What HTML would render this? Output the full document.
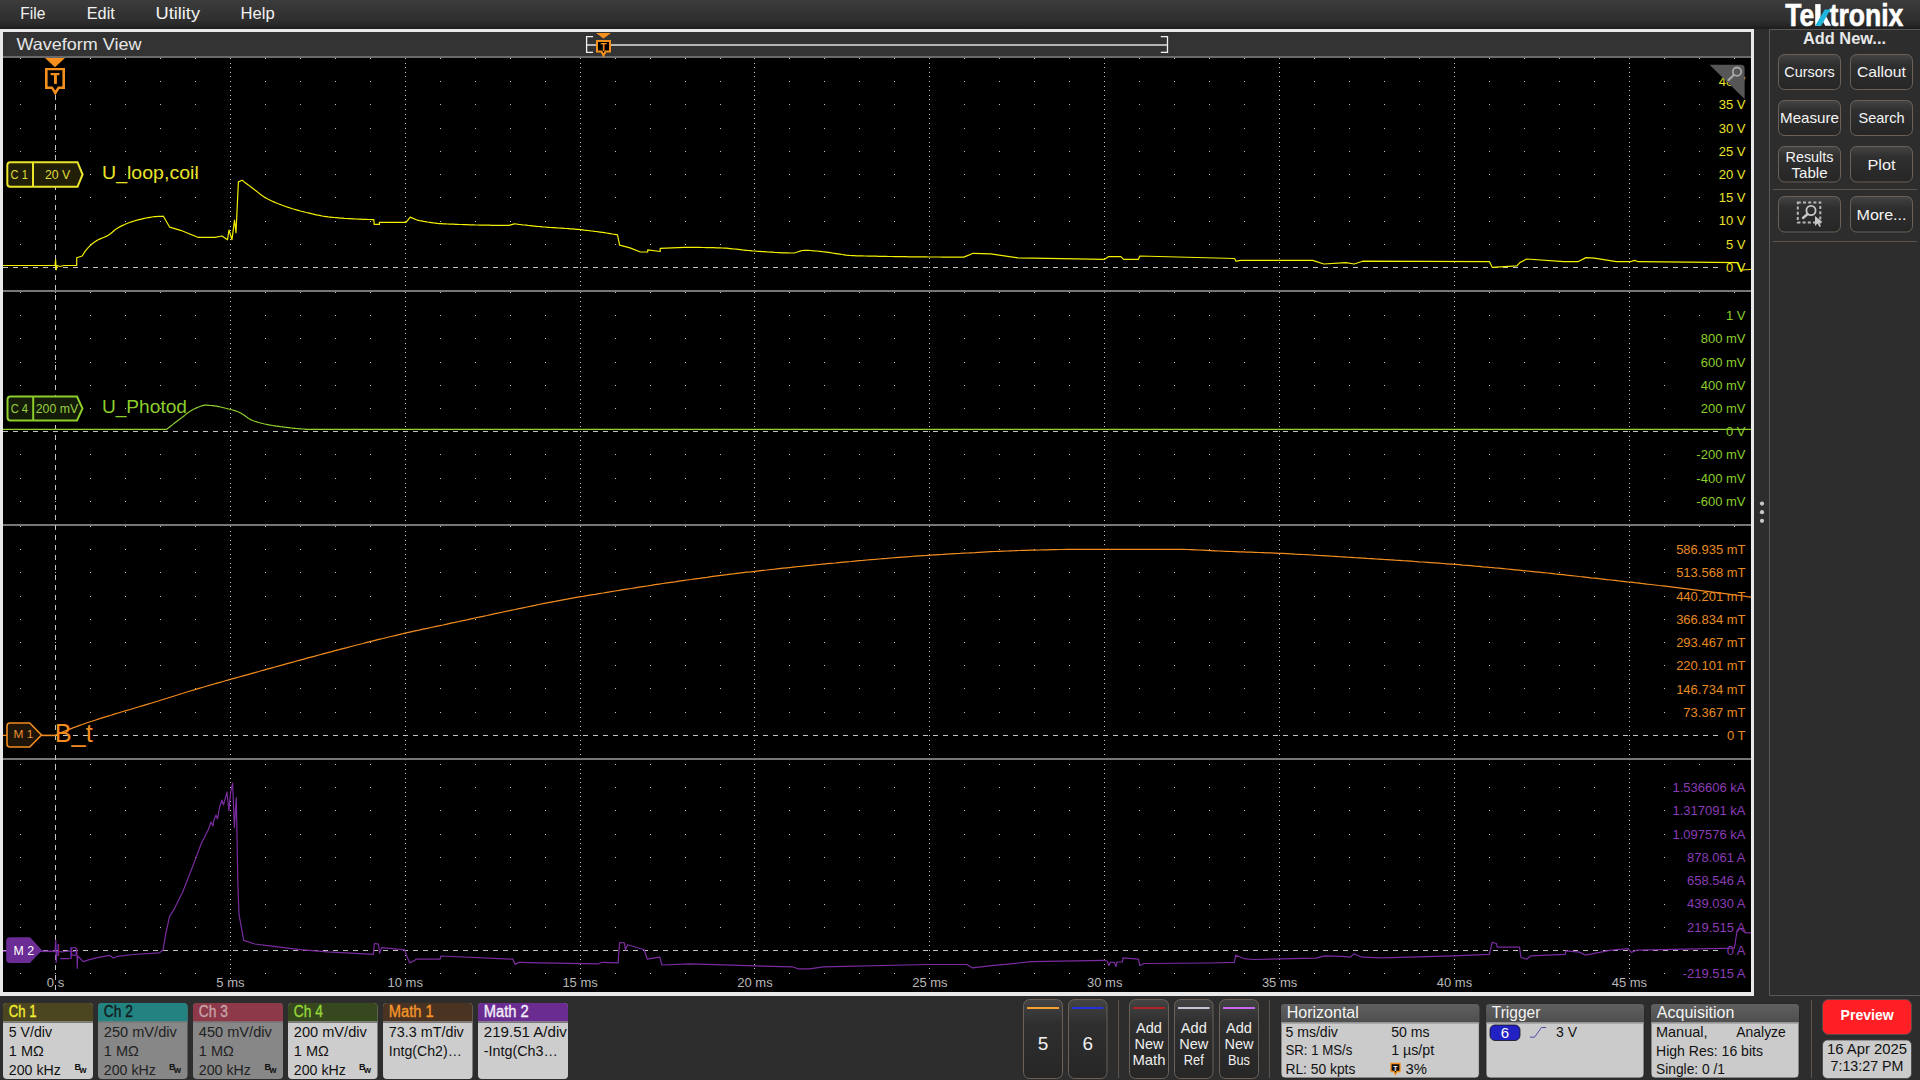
<!DOCTYPE html><html><head><meta charset="utf-8"><style>
html,body{margin:0;padding:0;width:1920px;height:1080px;overflow:hidden;background:#2c2c2c;}
svg text{font-family:"Liberation Sans", sans-serif;}
</style></head><body>
<svg width="1920" height="1080" viewBox="0 0 1920 1080" style="position:absolute;left:0;top:0;display:block">
<defs><linearGradient id="mb" x1="0" y1="0" x2="0" y2="1"><stop offset="0" stop-color="#3c3c3c"/><stop offset="0.72" stop-color="#2e2e2e"/><stop offset="0.86" stop-color="#272727"/><stop offset="1" stop-color="#1c1c1c"/></linearGradient><linearGradient id="btn" x1="0" y1="0" x2="0" y2="1"><stop offset="0" stop-color="#444"/><stop offset="0.3" stop-color="#2f2f2f"/><stop offset="1" stop-color="#262626"/></linearGradient><linearGradient id="hdr" x1="0" y1="0" x2="0" y2="1"><stop offset="0" stop-color="#606060"/><stop offset="1" stop-color="#4e4e4e"/></linearGradient></defs>
<rect x="0" y="0" width="1920" height="1080" fill="#2d2d2d"/>
<rect x="0" y="0" width="1920" height="29" fill="url(#mb)"/>
<text x="20.3" y="19.0" font-size="16" fill="#f2f2f2" textLength="25.0" lengthAdjust="spacingAndGlyphs">File</text>
<text x="86.7" y="19.0" font-size="16" fill="#f2f2f2" textLength="28.1" lengthAdjust="spacingAndGlyphs">Edit</text>
<text x="155.5" y="19.0" font-size="16" fill="#f2f2f2" textLength="44.5" lengthAdjust="spacingAndGlyphs">Utility</text>
<text x="240.6" y="19.0" font-size="16" fill="#f2f2f2" textLength="34.1" lengthAdjust="spacingAndGlyphs">Help</text>
<text x="1785.3" y="25.7" font-size="31" fill="#ffffff" textLength="28.9" lengthAdjust="spacingAndGlyphs" font-weight="bold" stroke="#fff" stroke-width="0.6">Te</text>
<text x="1829.6" y="25.7" font-size="31" fill="#ffffff" textLength="73.8" lengthAdjust="spacingAndGlyphs" font-weight="bold" stroke="#fff" stroke-width="0.6">tronix</text>
<rect x="1815.2" y="4.1" width="5.4" height="21.6" fill="#fff"/>
<path d="M1821.8 19.2 L1825.8 15.8 L1831.2 25.7 L1825.2 25.7 Z" fill="#fff"/>
<path d="M1815.2 25.7 L1821.3 25.7 L1830.4 9.5 L1824.7 9.5 Z" fill="#1eb6dc"/>
<rect x="0" y="29" width="1754" height="967" fill="#e9e9e9"/>
<rect x="3" y="32" width="1748" height="24" fill="#333333"/>
<rect x="3" y="56" width="1748" height="2" fill="#6a6a6a"/>
<rect x="3" y="58" width="1748" height="934" fill="#000000"/>
<text x="16.4" y="49.7" font-size="16.5" fill="#e6e6e6" textLength="125.0" lengthAdjust="spacingAndGlyphs">Waveform View</text>
<rect x="586" y="44" width="581" height="2" fill="#b4b4b4"/>
<path d="M593 36.6 H586.6 V52.4 H593" fill="none" stroke="#f0f0f0" stroke-width="1.3"/>
<path d="M1160.8 36.6 H1167.5 V52.4 H1160.8" fill="none" stroke="#f0f0f0" stroke-width="1.3"/>
<path d="M596 33 H611 L603.5 38.5 Z" fill="#f5901e"/>
<path d="M597 41 H610 V51.5 H605.5 L603.5 55.5 L601.5 51.5 H597 Z" fill="#000" stroke="#f5901e" stroke-width="2"/>
<text x="603.5" y="50.5" font-size="10" fill="#f5901e" text-anchor="middle" font-weight="bold">T</text>
<path fill="#c0c0c0" d="M20 58h1v1h-1zM55 58h1v1h-1zM90 58h1v1h-1zM125 58h1v1h-1zM160 58h1v1h-1zM195 58h1v1h-1zM230 58h1v1h-1zM265 58h1v1h-1zM300 58h1v1h-1zM335 58h1v1h-1zM370 58h1v1h-1zM405 58h1v1h-1zM440 58h1v1h-1zM475 58h1v1h-1zM510 58h1v1h-1zM545 58h1v1h-1zM580 58h1v1h-1zM615 58h1v1h-1zM650 58h1v1h-1zM685 58h1v1h-1zM720 58h1v1h-1zM754 58h1v1h-1zM789 58h1v1h-1zM824 58h1v1h-1zM859 58h1v1h-1zM894 58h1v1h-1zM929 58h1v1h-1zM964 58h1v1h-1zM999 58h1v1h-1zM1034 58h1v1h-1zM1069 58h1v1h-1zM1104 58h1v1h-1zM1139 58h1v1h-1zM1174 58h1v1h-1zM1209 58h1v1h-1zM1244 58h1v1h-1zM1279 58h1v1h-1zM1314 58h1v1h-1zM1349 58h1v1h-1zM1384 58h1v1h-1zM1419 58h1v1h-1zM1454 58h1v1h-1zM1489 58h1v1h-1zM1524 58h1v1h-1zM1559 58h1v1h-1zM1594 58h1v1h-1zM1629 58h1v1h-1zM1664 58h1v1h-1zM1699 58h1v1h-1zM1734 58h1v1h-1zM20 81h1v1h-1zM55 81h1v1h-1zM90 81h1v1h-1zM125 81h1v1h-1zM160 81h1v1h-1zM195 81h1v1h-1zM230 81h1v1h-1zM265 81h1v1h-1zM300 81h1v1h-1zM335 81h1v1h-1zM370 81h1v1h-1zM405 81h1v1h-1zM440 81h1v1h-1zM475 81h1v1h-1zM510 81h1v1h-1zM545 81h1v1h-1zM580 81h1v1h-1zM615 81h1v1h-1zM650 81h1v1h-1zM685 81h1v1h-1zM720 81h1v1h-1zM754 81h1v1h-1zM789 81h1v1h-1zM824 81h1v1h-1zM859 81h1v1h-1zM894 81h1v1h-1zM929 81h1v1h-1zM964 81h1v1h-1zM999 81h1v1h-1zM1034 81h1v1h-1zM1069 81h1v1h-1zM1104 81h1v1h-1zM1139 81h1v1h-1zM1174 81h1v1h-1zM1209 81h1v1h-1zM1244 81h1v1h-1zM1279 81h1v1h-1zM1314 81h1v1h-1zM1349 81h1v1h-1zM1384 81h1v1h-1zM1419 81h1v1h-1zM1454 81h1v1h-1zM1489 81h1v1h-1zM1524 81h1v1h-1zM1559 81h1v1h-1zM1594 81h1v1h-1zM1629 81h1v1h-1zM1664 81h1v1h-1zM1699 81h1v1h-1zM1734 81h1v1h-1zM20 104h1v1h-1zM55 104h1v1h-1zM90 104h1v1h-1zM125 104h1v1h-1zM160 104h1v1h-1zM195 104h1v1h-1zM230 104h1v1h-1zM265 104h1v1h-1zM300 104h1v1h-1zM335 104h1v1h-1zM370 104h1v1h-1zM405 104h1v1h-1zM440 104h1v1h-1zM475 104h1v1h-1zM510 104h1v1h-1zM545 104h1v1h-1zM580 104h1v1h-1zM615 104h1v1h-1zM650 104h1v1h-1zM685 104h1v1h-1zM720 104h1v1h-1zM754 104h1v1h-1zM789 104h1v1h-1zM824 104h1v1h-1zM859 104h1v1h-1zM894 104h1v1h-1zM929 104h1v1h-1zM964 104h1v1h-1zM999 104h1v1h-1zM1034 104h1v1h-1zM1069 104h1v1h-1zM1104 104h1v1h-1zM1139 104h1v1h-1zM1174 104h1v1h-1zM1209 104h1v1h-1zM1244 104h1v1h-1zM1279 104h1v1h-1zM1314 104h1v1h-1zM1349 104h1v1h-1zM1384 104h1v1h-1zM1419 104h1v1h-1zM1454 104h1v1h-1zM1489 104h1v1h-1zM1524 104h1v1h-1zM1559 104h1v1h-1zM1594 104h1v1h-1zM1629 104h1v1h-1zM1664 104h1v1h-1zM1699 104h1v1h-1zM1734 104h1v1h-1zM20 128h1v1h-1zM55 128h1v1h-1zM90 128h1v1h-1zM125 128h1v1h-1zM160 128h1v1h-1zM195 128h1v1h-1zM230 128h1v1h-1zM265 128h1v1h-1zM300 128h1v1h-1zM335 128h1v1h-1zM370 128h1v1h-1zM405 128h1v1h-1zM440 128h1v1h-1zM475 128h1v1h-1zM510 128h1v1h-1zM545 128h1v1h-1zM580 128h1v1h-1zM615 128h1v1h-1zM650 128h1v1h-1zM685 128h1v1h-1zM720 128h1v1h-1zM754 128h1v1h-1zM789 128h1v1h-1zM824 128h1v1h-1zM859 128h1v1h-1zM894 128h1v1h-1zM929 128h1v1h-1zM964 128h1v1h-1zM999 128h1v1h-1zM1034 128h1v1h-1zM1069 128h1v1h-1zM1104 128h1v1h-1zM1139 128h1v1h-1zM1174 128h1v1h-1zM1209 128h1v1h-1zM1244 128h1v1h-1zM1279 128h1v1h-1zM1314 128h1v1h-1zM1349 128h1v1h-1zM1384 128h1v1h-1zM1419 128h1v1h-1zM1454 128h1v1h-1zM1489 128h1v1h-1zM1524 128h1v1h-1zM1559 128h1v1h-1zM1594 128h1v1h-1zM1629 128h1v1h-1zM1664 128h1v1h-1zM1699 128h1v1h-1zM1734 128h1v1h-1zM20 151h1v1h-1zM55 151h1v1h-1zM90 151h1v1h-1zM125 151h1v1h-1zM160 151h1v1h-1zM195 151h1v1h-1zM230 151h1v1h-1zM265 151h1v1h-1zM300 151h1v1h-1zM335 151h1v1h-1zM370 151h1v1h-1zM405 151h1v1h-1zM440 151h1v1h-1zM475 151h1v1h-1zM510 151h1v1h-1zM545 151h1v1h-1zM580 151h1v1h-1zM615 151h1v1h-1zM650 151h1v1h-1zM685 151h1v1h-1zM720 151h1v1h-1zM754 151h1v1h-1zM789 151h1v1h-1zM824 151h1v1h-1zM859 151h1v1h-1zM894 151h1v1h-1zM929 151h1v1h-1zM964 151h1v1h-1zM999 151h1v1h-1zM1034 151h1v1h-1zM1069 151h1v1h-1zM1104 151h1v1h-1zM1139 151h1v1h-1zM1174 151h1v1h-1zM1209 151h1v1h-1zM1244 151h1v1h-1zM1279 151h1v1h-1zM1314 151h1v1h-1zM1349 151h1v1h-1zM1384 151h1v1h-1zM1419 151h1v1h-1zM1454 151h1v1h-1zM1489 151h1v1h-1zM1524 151h1v1h-1zM1559 151h1v1h-1zM1594 151h1v1h-1zM1629 151h1v1h-1zM1664 151h1v1h-1zM1699 151h1v1h-1zM1734 151h1v1h-1zM20 174h1v1h-1zM55 174h1v1h-1zM90 174h1v1h-1zM125 174h1v1h-1zM160 174h1v1h-1zM195 174h1v1h-1zM230 174h1v1h-1zM265 174h1v1h-1zM300 174h1v1h-1zM335 174h1v1h-1zM370 174h1v1h-1zM405 174h1v1h-1zM440 174h1v1h-1zM475 174h1v1h-1zM510 174h1v1h-1zM545 174h1v1h-1zM580 174h1v1h-1zM615 174h1v1h-1zM650 174h1v1h-1zM685 174h1v1h-1zM720 174h1v1h-1zM754 174h1v1h-1zM789 174h1v1h-1zM824 174h1v1h-1zM859 174h1v1h-1zM894 174h1v1h-1zM929 174h1v1h-1zM964 174h1v1h-1zM999 174h1v1h-1zM1034 174h1v1h-1zM1069 174h1v1h-1zM1104 174h1v1h-1zM1139 174h1v1h-1zM1174 174h1v1h-1zM1209 174h1v1h-1zM1244 174h1v1h-1zM1279 174h1v1h-1zM1314 174h1v1h-1zM1349 174h1v1h-1zM1384 174h1v1h-1zM1419 174h1v1h-1zM1454 174h1v1h-1zM1489 174h1v1h-1zM1524 174h1v1h-1zM1559 174h1v1h-1zM1594 174h1v1h-1zM1629 174h1v1h-1zM1664 174h1v1h-1zM1699 174h1v1h-1zM1734 174h1v1h-1zM20 197h1v1h-1zM55 197h1v1h-1zM90 197h1v1h-1zM125 197h1v1h-1zM160 197h1v1h-1zM195 197h1v1h-1zM230 197h1v1h-1zM265 197h1v1h-1zM300 197h1v1h-1zM335 197h1v1h-1zM370 197h1v1h-1zM405 197h1v1h-1zM440 197h1v1h-1zM475 197h1v1h-1zM510 197h1v1h-1zM545 197h1v1h-1zM580 197h1v1h-1zM615 197h1v1h-1zM650 197h1v1h-1zM685 197h1v1h-1zM720 197h1v1h-1zM754 197h1v1h-1zM789 197h1v1h-1zM824 197h1v1h-1zM859 197h1v1h-1zM894 197h1v1h-1zM929 197h1v1h-1zM964 197h1v1h-1zM999 197h1v1h-1zM1034 197h1v1h-1zM1069 197h1v1h-1zM1104 197h1v1h-1zM1139 197h1v1h-1zM1174 197h1v1h-1zM1209 197h1v1h-1zM1244 197h1v1h-1zM1279 197h1v1h-1zM1314 197h1v1h-1zM1349 197h1v1h-1zM1384 197h1v1h-1zM1419 197h1v1h-1zM1454 197h1v1h-1zM1489 197h1v1h-1zM1524 197h1v1h-1zM1559 197h1v1h-1zM1594 197h1v1h-1zM1629 197h1v1h-1zM1664 197h1v1h-1zM1699 197h1v1h-1zM1734 197h1v1h-1zM20 221h1v1h-1zM55 221h1v1h-1zM90 221h1v1h-1zM125 221h1v1h-1zM160 221h1v1h-1zM195 221h1v1h-1zM230 221h1v1h-1zM265 221h1v1h-1zM300 221h1v1h-1zM335 221h1v1h-1zM370 221h1v1h-1zM405 221h1v1h-1zM440 221h1v1h-1zM475 221h1v1h-1zM510 221h1v1h-1zM545 221h1v1h-1zM580 221h1v1h-1zM615 221h1v1h-1zM650 221h1v1h-1zM685 221h1v1h-1zM720 221h1v1h-1zM754 221h1v1h-1zM789 221h1v1h-1zM824 221h1v1h-1zM859 221h1v1h-1zM894 221h1v1h-1zM929 221h1v1h-1zM964 221h1v1h-1zM999 221h1v1h-1zM1034 221h1v1h-1zM1069 221h1v1h-1zM1104 221h1v1h-1zM1139 221h1v1h-1zM1174 221h1v1h-1zM1209 221h1v1h-1zM1244 221h1v1h-1zM1279 221h1v1h-1zM1314 221h1v1h-1zM1349 221h1v1h-1zM1384 221h1v1h-1zM1419 221h1v1h-1zM1454 221h1v1h-1zM1489 221h1v1h-1zM1524 221h1v1h-1zM1559 221h1v1h-1zM1594 221h1v1h-1zM1629 221h1v1h-1zM1664 221h1v1h-1zM1699 221h1v1h-1zM1734 221h1v1h-1zM20 244h1v1h-1zM55 244h1v1h-1zM90 244h1v1h-1zM125 244h1v1h-1zM160 244h1v1h-1zM195 244h1v1h-1zM230 244h1v1h-1zM265 244h1v1h-1zM300 244h1v1h-1zM335 244h1v1h-1zM370 244h1v1h-1zM405 244h1v1h-1zM440 244h1v1h-1zM475 244h1v1h-1zM510 244h1v1h-1zM545 244h1v1h-1zM580 244h1v1h-1zM615 244h1v1h-1zM650 244h1v1h-1zM685 244h1v1h-1zM720 244h1v1h-1zM754 244h1v1h-1zM789 244h1v1h-1zM824 244h1v1h-1zM859 244h1v1h-1zM894 244h1v1h-1zM929 244h1v1h-1zM964 244h1v1h-1zM999 244h1v1h-1zM1034 244h1v1h-1zM1069 244h1v1h-1zM1104 244h1v1h-1zM1139 244h1v1h-1zM1174 244h1v1h-1zM1209 244h1v1h-1zM1244 244h1v1h-1zM1279 244h1v1h-1zM1314 244h1v1h-1zM1349 244h1v1h-1zM1384 244h1v1h-1zM1419 244h1v1h-1zM1454 244h1v1h-1zM1489 244h1v1h-1zM1524 244h1v1h-1zM1559 244h1v1h-1zM1594 244h1v1h-1zM1629 244h1v1h-1zM1664 244h1v1h-1zM1699 244h1v1h-1zM1734 244h1v1h-1zM20 292h1v1h-1zM55 292h1v1h-1zM90 292h1v1h-1zM125 292h1v1h-1zM160 292h1v1h-1zM195 292h1v1h-1zM230 292h1v1h-1zM265 292h1v1h-1zM300 292h1v1h-1zM335 292h1v1h-1zM370 292h1v1h-1zM405 292h1v1h-1zM440 292h1v1h-1zM475 292h1v1h-1zM510 292h1v1h-1zM545 292h1v1h-1zM580 292h1v1h-1zM615 292h1v1h-1zM650 292h1v1h-1zM685 292h1v1h-1zM720 292h1v1h-1zM754 292h1v1h-1zM789 292h1v1h-1zM824 292h1v1h-1zM859 292h1v1h-1zM894 292h1v1h-1zM929 292h1v1h-1zM964 292h1v1h-1zM999 292h1v1h-1zM1034 292h1v1h-1zM1069 292h1v1h-1zM1104 292h1v1h-1zM1139 292h1v1h-1zM1174 292h1v1h-1zM1209 292h1v1h-1zM1244 292h1v1h-1zM1279 292h1v1h-1zM1314 292h1v1h-1zM1349 292h1v1h-1zM1384 292h1v1h-1zM1419 292h1v1h-1zM1454 292h1v1h-1zM1489 292h1v1h-1zM1524 292h1v1h-1zM1559 292h1v1h-1zM1594 292h1v1h-1zM1629 292h1v1h-1zM1664 292h1v1h-1zM1699 292h1v1h-1zM1734 292h1v1h-1zM20 315h1v1h-1zM55 315h1v1h-1zM90 315h1v1h-1zM125 315h1v1h-1zM160 315h1v1h-1zM195 315h1v1h-1zM230 315h1v1h-1zM265 315h1v1h-1zM300 315h1v1h-1zM335 315h1v1h-1zM370 315h1v1h-1zM405 315h1v1h-1zM440 315h1v1h-1zM475 315h1v1h-1zM510 315h1v1h-1zM545 315h1v1h-1zM580 315h1v1h-1zM615 315h1v1h-1zM650 315h1v1h-1zM685 315h1v1h-1zM720 315h1v1h-1zM754 315h1v1h-1zM789 315h1v1h-1zM824 315h1v1h-1zM859 315h1v1h-1zM894 315h1v1h-1zM929 315h1v1h-1zM964 315h1v1h-1zM999 315h1v1h-1zM1034 315h1v1h-1zM1069 315h1v1h-1zM1104 315h1v1h-1zM1139 315h1v1h-1zM1174 315h1v1h-1zM1209 315h1v1h-1zM1244 315h1v1h-1zM1279 315h1v1h-1zM1314 315h1v1h-1zM1349 315h1v1h-1zM1384 315h1v1h-1zM1419 315h1v1h-1zM1454 315h1v1h-1zM1489 315h1v1h-1zM1524 315h1v1h-1zM1559 315h1v1h-1zM1594 315h1v1h-1zM1629 315h1v1h-1zM1664 315h1v1h-1zM1699 315h1v1h-1zM1734 315h1v1h-1zM20 338h1v1h-1zM55 338h1v1h-1zM90 338h1v1h-1zM125 338h1v1h-1zM160 338h1v1h-1zM195 338h1v1h-1zM230 338h1v1h-1zM265 338h1v1h-1zM300 338h1v1h-1zM335 338h1v1h-1zM370 338h1v1h-1zM405 338h1v1h-1zM440 338h1v1h-1zM475 338h1v1h-1zM510 338h1v1h-1zM545 338h1v1h-1zM580 338h1v1h-1zM615 338h1v1h-1zM650 338h1v1h-1zM685 338h1v1h-1zM720 338h1v1h-1zM754 338h1v1h-1zM789 338h1v1h-1zM824 338h1v1h-1zM859 338h1v1h-1zM894 338h1v1h-1zM929 338h1v1h-1zM964 338h1v1h-1zM999 338h1v1h-1zM1034 338h1v1h-1zM1069 338h1v1h-1zM1104 338h1v1h-1zM1139 338h1v1h-1zM1174 338h1v1h-1zM1209 338h1v1h-1zM1244 338h1v1h-1zM1279 338h1v1h-1zM1314 338h1v1h-1zM1349 338h1v1h-1zM1384 338h1v1h-1zM1419 338h1v1h-1zM1454 338h1v1h-1zM1489 338h1v1h-1zM1524 338h1v1h-1zM1559 338h1v1h-1zM1594 338h1v1h-1zM1629 338h1v1h-1zM1664 338h1v1h-1zM1699 338h1v1h-1zM1734 338h1v1h-1zM20 362h1v1h-1zM55 362h1v1h-1zM90 362h1v1h-1zM125 362h1v1h-1zM160 362h1v1h-1zM195 362h1v1h-1zM230 362h1v1h-1zM265 362h1v1h-1zM300 362h1v1h-1zM335 362h1v1h-1zM370 362h1v1h-1zM405 362h1v1h-1zM440 362h1v1h-1zM475 362h1v1h-1zM510 362h1v1h-1zM545 362h1v1h-1zM580 362h1v1h-1zM615 362h1v1h-1zM650 362h1v1h-1zM685 362h1v1h-1zM720 362h1v1h-1zM754 362h1v1h-1zM789 362h1v1h-1zM824 362h1v1h-1zM859 362h1v1h-1zM894 362h1v1h-1zM929 362h1v1h-1zM964 362h1v1h-1zM999 362h1v1h-1zM1034 362h1v1h-1zM1069 362h1v1h-1zM1104 362h1v1h-1zM1139 362h1v1h-1zM1174 362h1v1h-1zM1209 362h1v1h-1zM1244 362h1v1h-1zM1279 362h1v1h-1zM1314 362h1v1h-1zM1349 362h1v1h-1zM1384 362h1v1h-1zM1419 362h1v1h-1zM1454 362h1v1h-1zM1489 362h1v1h-1zM1524 362h1v1h-1zM1559 362h1v1h-1zM1594 362h1v1h-1zM1629 362h1v1h-1zM1664 362h1v1h-1zM1699 362h1v1h-1zM1734 362h1v1h-1zM20 385h1v1h-1zM55 385h1v1h-1zM90 385h1v1h-1zM125 385h1v1h-1zM160 385h1v1h-1zM195 385h1v1h-1zM230 385h1v1h-1zM265 385h1v1h-1zM300 385h1v1h-1zM335 385h1v1h-1zM370 385h1v1h-1zM405 385h1v1h-1zM440 385h1v1h-1zM475 385h1v1h-1zM510 385h1v1h-1zM545 385h1v1h-1zM580 385h1v1h-1zM615 385h1v1h-1zM650 385h1v1h-1zM685 385h1v1h-1zM720 385h1v1h-1zM754 385h1v1h-1zM789 385h1v1h-1zM824 385h1v1h-1zM859 385h1v1h-1zM894 385h1v1h-1zM929 385h1v1h-1zM964 385h1v1h-1zM999 385h1v1h-1zM1034 385h1v1h-1zM1069 385h1v1h-1zM1104 385h1v1h-1zM1139 385h1v1h-1zM1174 385h1v1h-1zM1209 385h1v1h-1zM1244 385h1v1h-1zM1279 385h1v1h-1zM1314 385h1v1h-1zM1349 385h1v1h-1zM1384 385h1v1h-1zM1419 385h1v1h-1zM1454 385h1v1h-1zM1489 385h1v1h-1zM1524 385h1v1h-1zM1559 385h1v1h-1zM1594 385h1v1h-1zM1629 385h1v1h-1zM1664 385h1v1h-1zM1699 385h1v1h-1zM1734 385h1v1h-1zM20 408h1v1h-1zM55 408h1v1h-1zM90 408h1v1h-1zM125 408h1v1h-1zM160 408h1v1h-1zM195 408h1v1h-1zM230 408h1v1h-1zM265 408h1v1h-1zM300 408h1v1h-1zM335 408h1v1h-1zM370 408h1v1h-1zM405 408h1v1h-1zM440 408h1v1h-1zM475 408h1v1h-1zM510 408h1v1h-1zM545 408h1v1h-1zM580 408h1v1h-1zM615 408h1v1h-1zM650 408h1v1h-1zM685 408h1v1h-1zM720 408h1v1h-1zM754 408h1v1h-1zM789 408h1v1h-1zM824 408h1v1h-1zM859 408h1v1h-1zM894 408h1v1h-1zM929 408h1v1h-1zM964 408h1v1h-1zM999 408h1v1h-1zM1034 408h1v1h-1zM1069 408h1v1h-1zM1104 408h1v1h-1zM1139 408h1v1h-1zM1174 408h1v1h-1zM1209 408h1v1h-1zM1244 408h1v1h-1zM1279 408h1v1h-1zM1314 408h1v1h-1zM1349 408h1v1h-1zM1384 408h1v1h-1zM1419 408h1v1h-1zM1454 408h1v1h-1zM1489 408h1v1h-1zM1524 408h1v1h-1zM1559 408h1v1h-1zM1594 408h1v1h-1zM1629 408h1v1h-1zM1664 408h1v1h-1zM1699 408h1v1h-1zM1734 408h1v1h-1zM20 454h1v1h-1zM55 454h1v1h-1zM90 454h1v1h-1zM125 454h1v1h-1zM160 454h1v1h-1zM195 454h1v1h-1zM230 454h1v1h-1zM265 454h1v1h-1zM300 454h1v1h-1zM335 454h1v1h-1zM370 454h1v1h-1zM405 454h1v1h-1zM440 454h1v1h-1zM475 454h1v1h-1zM510 454h1v1h-1zM545 454h1v1h-1zM580 454h1v1h-1zM615 454h1v1h-1zM650 454h1v1h-1zM685 454h1v1h-1zM720 454h1v1h-1zM754 454h1v1h-1zM789 454h1v1h-1zM824 454h1v1h-1zM859 454h1v1h-1zM894 454h1v1h-1zM929 454h1v1h-1zM964 454h1v1h-1zM999 454h1v1h-1zM1034 454h1v1h-1zM1069 454h1v1h-1zM1104 454h1v1h-1zM1139 454h1v1h-1zM1174 454h1v1h-1zM1209 454h1v1h-1zM1244 454h1v1h-1zM1279 454h1v1h-1zM1314 454h1v1h-1zM1349 454h1v1h-1zM1384 454h1v1h-1zM1419 454h1v1h-1zM1454 454h1v1h-1zM1489 454h1v1h-1zM1524 454h1v1h-1zM1559 454h1v1h-1zM1594 454h1v1h-1zM1629 454h1v1h-1zM1664 454h1v1h-1zM1699 454h1v1h-1zM1734 454h1v1h-1zM20 478h1v1h-1zM55 478h1v1h-1zM90 478h1v1h-1zM125 478h1v1h-1zM160 478h1v1h-1zM195 478h1v1h-1zM230 478h1v1h-1zM265 478h1v1h-1zM300 478h1v1h-1zM335 478h1v1h-1zM370 478h1v1h-1zM405 478h1v1h-1zM440 478h1v1h-1zM475 478h1v1h-1zM510 478h1v1h-1zM545 478h1v1h-1zM580 478h1v1h-1zM615 478h1v1h-1zM650 478h1v1h-1zM685 478h1v1h-1zM720 478h1v1h-1zM754 478h1v1h-1zM789 478h1v1h-1zM824 478h1v1h-1zM859 478h1v1h-1zM894 478h1v1h-1zM929 478h1v1h-1zM964 478h1v1h-1zM999 478h1v1h-1zM1034 478h1v1h-1zM1069 478h1v1h-1zM1104 478h1v1h-1zM1139 478h1v1h-1zM1174 478h1v1h-1zM1209 478h1v1h-1zM1244 478h1v1h-1zM1279 478h1v1h-1zM1314 478h1v1h-1zM1349 478h1v1h-1zM1384 478h1v1h-1zM1419 478h1v1h-1zM1454 478h1v1h-1zM1489 478h1v1h-1zM1524 478h1v1h-1zM1559 478h1v1h-1zM1594 478h1v1h-1zM1629 478h1v1h-1zM1664 478h1v1h-1zM1699 478h1v1h-1zM1734 478h1v1h-1zM20 501h1v1h-1zM55 501h1v1h-1zM90 501h1v1h-1zM125 501h1v1h-1zM160 501h1v1h-1zM195 501h1v1h-1zM230 501h1v1h-1zM265 501h1v1h-1zM300 501h1v1h-1zM335 501h1v1h-1zM370 501h1v1h-1zM405 501h1v1h-1zM440 501h1v1h-1zM475 501h1v1h-1zM510 501h1v1h-1zM545 501h1v1h-1zM580 501h1v1h-1zM615 501h1v1h-1zM650 501h1v1h-1zM685 501h1v1h-1zM720 501h1v1h-1zM754 501h1v1h-1zM789 501h1v1h-1zM824 501h1v1h-1zM859 501h1v1h-1zM894 501h1v1h-1zM929 501h1v1h-1zM964 501h1v1h-1zM999 501h1v1h-1zM1034 501h1v1h-1zM1069 501h1v1h-1zM1104 501h1v1h-1zM1139 501h1v1h-1zM1174 501h1v1h-1zM1209 501h1v1h-1zM1244 501h1v1h-1zM1279 501h1v1h-1zM1314 501h1v1h-1zM1349 501h1v1h-1zM1384 501h1v1h-1zM1419 501h1v1h-1zM1454 501h1v1h-1zM1489 501h1v1h-1zM1524 501h1v1h-1zM1559 501h1v1h-1zM1594 501h1v1h-1zM1629 501h1v1h-1zM1664 501h1v1h-1zM1699 501h1v1h-1zM1734 501h1v1h-1zM20 526h1v1h-1zM55 526h1v1h-1zM90 526h1v1h-1zM125 526h1v1h-1zM160 526h1v1h-1zM195 526h1v1h-1zM230 526h1v1h-1zM265 526h1v1h-1zM300 526h1v1h-1zM335 526h1v1h-1zM370 526h1v1h-1zM405 526h1v1h-1zM440 526h1v1h-1zM475 526h1v1h-1zM510 526h1v1h-1zM545 526h1v1h-1zM580 526h1v1h-1zM615 526h1v1h-1zM650 526h1v1h-1zM685 526h1v1h-1zM720 526h1v1h-1zM754 526h1v1h-1zM789 526h1v1h-1zM824 526h1v1h-1zM859 526h1v1h-1zM894 526h1v1h-1zM929 526h1v1h-1zM964 526h1v1h-1zM999 526h1v1h-1zM1034 526h1v1h-1zM1069 526h1v1h-1zM1104 526h1v1h-1zM1139 526h1v1h-1zM1174 526h1v1h-1zM1209 526h1v1h-1zM1244 526h1v1h-1zM1279 526h1v1h-1zM1314 526h1v1h-1zM1349 526h1v1h-1zM1384 526h1v1h-1zM1419 526h1v1h-1zM1454 526h1v1h-1zM1489 526h1v1h-1zM1524 526h1v1h-1zM1559 526h1v1h-1zM1594 526h1v1h-1zM1629 526h1v1h-1zM1664 526h1v1h-1zM1699 526h1v1h-1zM1734 526h1v1h-1zM20 549h1v1h-1zM55 549h1v1h-1zM90 549h1v1h-1zM125 549h1v1h-1zM160 549h1v1h-1zM195 549h1v1h-1zM230 549h1v1h-1zM265 549h1v1h-1zM300 549h1v1h-1zM335 549h1v1h-1zM370 549h1v1h-1zM405 549h1v1h-1zM440 549h1v1h-1zM475 549h1v1h-1zM510 549h1v1h-1zM545 549h1v1h-1zM580 549h1v1h-1zM615 549h1v1h-1zM650 549h1v1h-1zM685 549h1v1h-1zM720 549h1v1h-1zM754 549h1v1h-1zM789 549h1v1h-1zM824 549h1v1h-1zM859 549h1v1h-1zM894 549h1v1h-1zM929 549h1v1h-1zM964 549h1v1h-1zM999 549h1v1h-1zM1034 549h1v1h-1zM1069 549h1v1h-1zM1104 549h1v1h-1zM1139 549h1v1h-1zM1174 549h1v1h-1zM1209 549h1v1h-1zM1244 549h1v1h-1zM1279 549h1v1h-1zM1314 549h1v1h-1zM1349 549h1v1h-1zM1384 549h1v1h-1zM1419 549h1v1h-1zM1454 549h1v1h-1zM1489 549h1v1h-1zM1524 549h1v1h-1zM1559 549h1v1h-1zM1594 549h1v1h-1zM1629 549h1v1h-1zM1664 549h1v1h-1zM1699 549h1v1h-1zM1734 549h1v1h-1zM20 572h1v1h-1zM55 572h1v1h-1zM90 572h1v1h-1zM125 572h1v1h-1zM160 572h1v1h-1zM195 572h1v1h-1zM230 572h1v1h-1zM265 572h1v1h-1zM300 572h1v1h-1zM335 572h1v1h-1zM370 572h1v1h-1zM405 572h1v1h-1zM440 572h1v1h-1zM475 572h1v1h-1zM510 572h1v1h-1zM545 572h1v1h-1zM580 572h1v1h-1zM615 572h1v1h-1zM650 572h1v1h-1zM685 572h1v1h-1zM720 572h1v1h-1zM754 572h1v1h-1zM789 572h1v1h-1zM824 572h1v1h-1zM859 572h1v1h-1zM894 572h1v1h-1zM929 572h1v1h-1zM964 572h1v1h-1zM999 572h1v1h-1zM1034 572h1v1h-1zM1069 572h1v1h-1zM1104 572h1v1h-1zM1139 572h1v1h-1zM1174 572h1v1h-1zM1209 572h1v1h-1zM1244 572h1v1h-1zM1279 572h1v1h-1zM1314 572h1v1h-1zM1349 572h1v1h-1zM1384 572h1v1h-1zM1419 572h1v1h-1zM1454 572h1v1h-1zM1489 572h1v1h-1zM1524 572h1v1h-1zM1559 572h1v1h-1zM1594 572h1v1h-1zM1629 572h1v1h-1zM1664 572h1v1h-1zM1699 572h1v1h-1zM1734 572h1v1h-1zM20 596h1v1h-1zM55 596h1v1h-1zM90 596h1v1h-1zM125 596h1v1h-1zM160 596h1v1h-1zM195 596h1v1h-1zM230 596h1v1h-1zM265 596h1v1h-1zM300 596h1v1h-1zM335 596h1v1h-1zM370 596h1v1h-1zM405 596h1v1h-1zM440 596h1v1h-1zM475 596h1v1h-1zM510 596h1v1h-1zM545 596h1v1h-1zM580 596h1v1h-1zM615 596h1v1h-1zM650 596h1v1h-1zM685 596h1v1h-1zM720 596h1v1h-1zM754 596h1v1h-1zM789 596h1v1h-1zM824 596h1v1h-1zM859 596h1v1h-1zM894 596h1v1h-1zM929 596h1v1h-1zM964 596h1v1h-1zM999 596h1v1h-1zM1034 596h1v1h-1zM1069 596h1v1h-1zM1104 596h1v1h-1zM1139 596h1v1h-1zM1174 596h1v1h-1zM1209 596h1v1h-1zM1244 596h1v1h-1zM1279 596h1v1h-1zM1314 596h1v1h-1zM1349 596h1v1h-1zM1384 596h1v1h-1zM1419 596h1v1h-1zM1454 596h1v1h-1zM1489 596h1v1h-1zM1524 596h1v1h-1zM1559 596h1v1h-1zM1594 596h1v1h-1zM1629 596h1v1h-1zM1664 596h1v1h-1zM1699 596h1v1h-1zM1734 596h1v1h-1zM20 619h1v1h-1zM55 619h1v1h-1zM90 619h1v1h-1zM125 619h1v1h-1zM160 619h1v1h-1zM195 619h1v1h-1zM230 619h1v1h-1zM265 619h1v1h-1zM300 619h1v1h-1zM335 619h1v1h-1zM370 619h1v1h-1zM405 619h1v1h-1zM440 619h1v1h-1zM475 619h1v1h-1zM510 619h1v1h-1zM545 619h1v1h-1zM580 619h1v1h-1zM615 619h1v1h-1zM650 619h1v1h-1zM685 619h1v1h-1zM720 619h1v1h-1zM754 619h1v1h-1zM789 619h1v1h-1zM824 619h1v1h-1zM859 619h1v1h-1zM894 619h1v1h-1zM929 619h1v1h-1zM964 619h1v1h-1zM999 619h1v1h-1zM1034 619h1v1h-1zM1069 619h1v1h-1zM1104 619h1v1h-1zM1139 619h1v1h-1zM1174 619h1v1h-1zM1209 619h1v1h-1zM1244 619h1v1h-1zM1279 619h1v1h-1zM1314 619h1v1h-1zM1349 619h1v1h-1zM1384 619h1v1h-1zM1419 619h1v1h-1zM1454 619h1v1h-1zM1489 619h1v1h-1zM1524 619h1v1h-1zM1559 619h1v1h-1zM1594 619h1v1h-1zM1629 619h1v1h-1zM1664 619h1v1h-1zM1699 619h1v1h-1zM1734 619h1v1h-1zM20 642h1v1h-1zM55 642h1v1h-1zM90 642h1v1h-1zM125 642h1v1h-1zM160 642h1v1h-1zM195 642h1v1h-1zM230 642h1v1h-1zM265 642h1v1h-1zM300 642h1v1h-1zM335 642h1v1h-1zM370 642h1v1h-1zM405 642h1v1h-1zM440 642h1v1h-1zM475 642h1v1h-1zM510 642h1v1h-1zM545 642h1v1h-1zM580 642h1v1h-1zM615 642h1v1h-1zM650 642h1v1h-1zM685 642h1v1h-1zM720 642h1v1h-1zM754 642h1v1h-1zM789 642h1v1h-1zM824 642h1v1h-1zM859 642h1v1h-1zM894 642h1v1h-1zM929 642h1v1h-1zM964 642h1v1h-1zM999 642h1v1h-1zM1034 642h1v1h-1zM1069 642h1v1h-1zM1104 642h1v1h-1zM1139 642h1v1h-1zM1174 642h1v1h-1zM1209 642h1v1h-1zM1244 642h1v1h-1zM1279 642h1v1h-1zM1314 642h1v1h-1zM1349 642h1v1h-1zM1384 642h1v1h-1zM1419 642h1v1h-1zM1454 642h1v1h-1zM1489 642h1v1h-1zM1524 642h1v1h-1zM1559 642h1v1h-1zM1594 642h1v1h-1zM1629 642h1v1h-1zM1664 642h1v1h-1zM1699 642h1v1h-1zM1734 642h1v1h-1zM20 665h1v1h-1zM55 665h1v1h-1zM90 665h1v1h-1zM125 665h1v1h-1zM160 665h1v1h-1zM195 665h1v1h-1zM230 665h1v1h-1zM265 665h1v1h-1zM300 665h1v1h-1zM335 665h1v1h-1zM370 665h1v1h-1zM405 665h1v1h-1zM440 665h1v1h-1zM475 665h1v1h-1zM510 665h1v1h-1zM545 665h1v1h-1zM580 665h1v1h-1zM615 665h1v1h-1zM650 665h1v1h-1zM685 665h1v1h-1zM720 665h1v1h-1zM754 665h1v1h-1zM789 665h1v1h-1zM824 665h1v1h-1zM859 665h1v1h-1zM894 665h1v1h-1zM929 665h1v1h-1zM964 665h1v1h-1zM999 665h1v1h-1zM1034 665h1v1h-1zM1069 665h1v1h-1zM1104 665h1v1h-1zM1139 665h1v1h-1zM1174 665h1v1h-1zM1209 665h1v1h-1zM1244 665h1v1h-1zM1279 665h1v1h-1zM1314 665h1v1h-1zM1349 665h1v1h-1zM1384 665h1v1h-1zM1419 665h1v1h-1zM1454 665h1v1h-1zM1489 665h1v1h-1zM1524 665h1v1h-1zM1559 665h1v1h-1zM1594 665h1v1h-1zM1629 665h1v1h-1zM1664 665h1v1h-1zM1699 665h1v1h-1zM1734 665h1v1h-1zM20 688h1v1h-1zM55 688h1v1h-1zM90 688h1v1h-1zM125 688h1v1h-1zM160 688h1v1h-1zM195 688h1v1h-1zM230 688h1v1h-1zM265 688h1v1h-1zM300 688h1v1h-1zM335 688h1v1h-1zM370 688h1v1h-1zM405 688h1v1h-1zM440 688h1v1h-1zM475 688h1v1h-1zM510 688h1v1h-1zM545 688h1v1h-1zM580 688h1v1h-1zM615 688h1v1h-1zM650 688h1v1h-1zM685 688h1v1h-1zM720 688h1v1h-1zM754 688h1v1h-1zM789 688h1v1h-1zM824 688h1v1h-1zM859 688h1v1h-1zM894 688h1v1h-1zM929 688h1v1h-1zM964 688h1v1h-1zM999 688h1v1h-1zM1034 688h1v1h-1zM1069 688h1v1h-1zM1104 688h1v1h-1zM1139 688h1v1h-1zM1174 688h1v1h-1zM1209 688h1v1h-1zM1244 688h1v1h-1zM1279 688h1v1h-1zM1314 688h1v1h-1zM1349 688h1v1h-1zM1384 688h1v1h-1zM1419 688h1v1h-1zM1454 688h1v1h-1zM1489 688h1v1h-1zM1524 688h1v1h-1zM1559 688h1v1h-1zM1594 688h1v1h-1zM1629 688h1v1h-1zM1664 688h1v1h-1zM1699 688h1v1h-1zM1734 688h1v1h-1zM20 712h1v1h-1zM55 712h1v1h-1zM90 712h1v1h-1zM125 712h1v1h-1zM160 712h1v1h-1zM195 712h1v1h-1zM230 712h1v1h-1zM265 712h1v1h-1zM300 712h1v1h-1zM335 712h1v1h-1zM370 712h1v1h-1zM405 712h1v1h-1zM440 712h1v1h-1zM475 712h1v1h-1zM510 712h1v1h-1zM545 712h1v1h-1zM580 712h1v1h-1zM615 712h1v1h-1zM650 712h1v1h-1zM685 712h1v1h-1zM720 712h1v1h-1zM754 712h1v1h-1zM789 712h1v1h-1zM824 712h1v1h-1zM859 712h1v1h-1zM894 712h1v1h-1zM929 712h1v1h-1zM964 712h1v1h-1zM999 712h1v1h-1zM1034 712h1v1h-1zM1069 712h1v1h-1zM1104 712h1v1h-1zM1139 712h1v1h-1zM1174 712h1v1h-1zM1209 712h1v1h-1zM1244 712h1v1h-1zM1279 712h1v1h-1zM1314 712h1v1h-1zM1349 712h1v1h-1zM1384 712h1v1h-1zM1419 712h1v1h-1zM1454 712h1v1h-1zM1489 712h1v1h-1zM1524 712h1v1h-1zM1559 712h1v1h-1zM1594 712h1v1h-1zM1629 712h1v1h-1zM1664 712h1v1h-1zM1699 712h1v1h-1zM1734 712h1v1h-1zM20 764h1v1h-1zM55 764h1v1h-1zM90 764h1v1h-1zM125 764h1v1h-1zM160 764h1v1h-1zM195 764h1v1h-1zM230 764h1v1h-1zM265 764h1v1h-1zM300 764h1v1h-1zM335 764h1v1h-1zM370 764h1v1h-1zM405 764h1v1h-1zM440 764h1v1h-1zM475 764h1v1h-1zM510 764h1v1h-1zM545 764h1v1h-1zM580 764h1v1h-1zM615 764h1v1h-1zM650 764h1v1h-1zM685 764h1v1h-1zM720 764h1v1h-1zM754 764h1v1h-1zM789 764h1v1h-1zM824 764h1v1h-1zM859 764h1v1h-1zM894 764h1v1h-1zM929 764h1v1h-1zM964 764h1v1h-1zM999 764h1v1h-1zM1034 764h1v1h-1zM1069 764h1v1h-1zM1104 764h1v1h-1zM1139 764h1v1h-1zM1174 764h1v1h-1zM1209 764h1v1h-1zM1244 764h1v1h-1zM1279 764h1v1h-1zM1314 764h1v1h-1zM1349 764h1v1h-1zM1384 764h1v1h-1zM1419 764h1v1h-1zM1454 764h1v1h-1zM1489 764h1v1h-1zM1524 764h1v1h-1zM1559 764h1v1h-1zM1594 764h1v1h-1zM1629 764h1v1h-1zM1664 764h1v1h-1zM1699 764h1v1h-1zM1734 764h1v1h-1zM20 787h1v1h-1zM55 787h1v1h-1zM90 787h1v1h-1zM125 787h1v1h-1zM160 787h1v1h-1zM195 787h1v1h-1zM230 787h1v1h-1zM265 787h1v1h-1zM300 787h1v1h-1zM335 787h1v1h-1zM370 787h1v1h-1zM405 787h1v1h-1zM440 787h1v1h-1zM475 787h1v1h-1zM510 787h1v1h-1zM545 787h1v1h-1zM580 787h1v1h-1zM615 787h1v1h-1zM650 787h1v1h-1zM685 787h1v1h-1zM720 787h1v1h-1zM754 787h1v1h-1zM789 787h1v1h-1zM824 787h1v1h-1zM859 787h1v1h-1zM894 787h1v1h-1zM929 787h1v1h-1zM964 787h1v1h-1zM999 787h1v1h-1zM1034 787h1v1h-1zM1069 787h1v1h-1zM1104 787h1v1h-1zM1139 787h1v1h-1zM1174 787h1v1h-1zM1209 787h1v1h-1zM1244 787h1v1h-1zM1279 787h1v1h-1zM1314 787h1v1h-1zM1349 787h1v1h-1zM1384 787h1v1h-1zM1419 787h1v1h-1zM1454 787h1v1h-1zM1489 787h1v1h-1zM1524 787h1v1h-1zM1559 787h1v1h-1zM1594 787h1v1h-1zM1629 787h1v1h-1zM1664 787h1v1h-1zM1699 787h1v1h-1zM1734 787h1v1h-1zM20 810h1v1h-1zM55 810h1v1h-1zM90 810h1v1h-1zM125 810h1v1h-1zM160 810h1v1h-1zM195 810h1v1h-1zM230 810h1v1h-1zM265 810h1v1h-1zM300 810h1v1h-1zM335 810h1v1h-1zM370 810h1v1h-1zM405 810h1v1h-1zM440 810h1v1h-1zM475 810h1v1h-1zM510 810h1v1h-1zM545 810h1v1h-1zM580 810h1v1h-1zM615 810h1v1h-1zM650 810h1v1h-1zM685 810h1v1h-1zM720 810h1v1h-1zM754 810h1v1h-1zM789 810h1v1h-1zM824 810h1v1h-1zM859 810h1v1h-1zM894 810h1v1h-1zM929 810h1v1h-1zM964 810h1v1h-1zM999 810h1v1h-1zM1034 810h1v1h-1zM1069 810h1v1h-1zM1104 810h1v1h-1zM1139 810h1v1h-1zM1174 810h1v1h-1zM1209 810h1v1h-1zM1244 810h1v1h-1zM1279 810h1v1h-1zM1314 810h1v1h-1zM1349 810h1v1h-1zM1384 810h1v1h-1zM1419 810h1v1h-1zM1454 810h1v1h-1zM1489 810h1v1h-1zM1524 810h1v1h-1zM1559 810h1v1h-1zM1594 810h1v1h-1zM1629 810h1v1h-1zM1664 810h1v1h-1zM1699 810h1v1h-1zM1734 810h1v1h-1zM20 834h1v1h-1zM55 834h1v1h-1zM90 834h1v1h-1zM125 834h1v1h-1zM160 834h1v1h-1zM195 834h1v1h-1zM230 834h1v1h-1zM265 834h1v1h-1zM300 834h1v1h-1zM335 834h1v1h-1zM370 834h1v1h-1zM405 834h1v1h-1zM440 834h1v1h-1zM475 834h1v1h-1zM510 834h1v1h-1zM545 834h1v1h-1zM580 834h1v1h-1zM615 834h1v1h-1zM650 834h1v1h-1zM685 834h1v1h-1zM720 834h1v1h-1zM754 834h1v1h-1zM789 834h1v1h-1zM824 834h1v1h-1zM859 834h1v1h-1zM894 834h1v1h-1zM929 834h1v1h-1zM964 834h1v1h-1zM999 834h1v1h-1zM1034 834h1v1h-1zM1069 834h1v1h-1zM1104 834h1v1h-1zM1139 834h1v1h-1zM1174 834h1v1h-1zM1209 834h1v1h-1zM1244 834h1v1h-1zM1279 834h1v1h-1zM1314 834h1v1h-1zM1349 834h1v1h-1zM1384 834h1v1h-1zM1419 834h1v1h-1zM1454 834h1v1h-1zM1489 834h1v1h-1zM1524 834h1v1h-1zM1559 834h1v1h-1zM1594 834h1v1h-1zM1629 834h1v1h-1zM1664 834h1v1h-1zM1699 834h1v1h-1zM1734 834h1v1h-1zM20 857h1v1h-1zM55 857h1v1h-1zM90 857h1v1h-1zM125 857h1v1h-1zM160 857h1v1h-1zM195 857h1v1h-1zM230 857h1v1h-1zM265 857h1v1h-1zM300 857h1v1h-1zM335 857h1v1h-1zM370 857h1v1h-1zM405 857h1v1h-1zM440 857h1v1h-1zM475 857h1v1h-1zM510 857h1v1h-1zM545 857h1v1h-1zM580 857h1v1h-1zM615 857h1v1h-1zM650 857h1v1h-1zM685 857h1v1h-1zM720 857h1v1h-1zM754 857h1v1h-1zM789 857h1v1h-1zM824 857h1v1h-1zM859 857h1v1h-1zM894 857h1v1h-1zM929 857h1v1h-1zM964 857h1v1h-1zM999 857h1v1h-1zM1034 857h1v1h-1zM1069 857h1v1h-1zM1104 857h1v1h-1zM1139 857h1v1h-1zM1174 857h1v1h-1zM1209 857h1v1h-1zM1244 857h1v1h-1zM1279 857h1v1h-1zM1314 857h1v1h-1zM1349 857h1v1h-1zM1384 857h1v1h-1zM1419 857h1v1h-1zM1454 857h1v1h-1zM1489 857h1v1h-1zM1524 857h1v1h-1zM1559 857h1v1h-1zM1594 857h1v1h-1zM1629 857h1v1h-1zM1664 857h1v1h-1zM1699 857h1v1h-1zM1734 857h1v1h-1zM20 880h1v1h-1zM55 880h1v1h-1zM90 880h1v1h-1zM125 880h1v1h-1zM160 880h1v1h-1zM195 880h1v1h-1zM230 880h1v1h-1zM265 880h1v1h-1zM300 880h1v1h-1zM335 880h1v1h-1zM370 880h1v1h-1zM405 880h1v1h-1zM440 880h1v1h-1zM475 880h1v1h-1zM510 880h1v1h-1zM545 880h1v1h-1zM580 880h1v1h-1zM615 880h1v1h-1zM650 880h1v1h-1zM685 880h1v1h-1zM720 880h1v1h-1zM754 880h1v1h-1zM789 880h1v1h-1zM824 880h1v1h-1zM859 880h1v1h-1zM894 880h1v1h-1zM929 880h1v1h-1zM964 880h1v1h-1zM999 880h1v1h-1zM1034 880h1v1h-1zM1069 880h1v1h-1zM1104 880h1v1h-1zM1139 880h1v1h-1zM1174 880h1v1h-1zM1209 880h1v1h-1zM1244 880h1v1h-1zM1279 880h1v1h-1zM1314 880h1v1h-1zM1349 880h1v1h-1zM1384 880h1v1h-1zM1419 880h1v1h-1zM1454 880h1v1h-1zM1489 880h1v1h-1zM1524 880h1v1h-1zM1559 880h1v1h-1zM1594 880h1v1h-1zM1629 880h1v1h-1zM1664 880h1v1h-1zM1699 880h1v1h-1zM1734 880h1v1h-1zM20 904h1v1h-1zM55 904h1v1h-1zM90 904h1v1h-1zM125 904h1v1h-1zM160 904h1v1h-1zM195 904h1v1h-1zM230 904h1v1h-1zM265 904h1v1h-1zM300 904h1v1h-1zM335 904h1v1h-1zM370 904h1v1h-1zM405 904h1v1h-1zM440 904h1v1h-1zM475 904h1v1h-1zM510 904h1v1h-1zM545 904h1v1h-1zM580 904h1v1h-1zM615 904h1v1h-1zM650 904h1v1h-1zM685 904h1v1h-1zM720 904h1v1h-1zM754 904h1v1h-1zM789 904h1v1h-1zM824 904h1v1h-1zM859 904h1v1h-1zM894 904h1v1h-1zM929 904h1v1h-1zM964 904h1v1h-1zM999 904h1v1h-1zM1034 904h1v1h-1zM1069 904h1v1h-1zM1104 904h1v1h-1zM1139 904h1v1h-1zM1174 904h1v1h-1zM1209 904h1v1h-1zM1244 904h1v1h-1zM1279 904h1v1h-1zM1314 904h1v1h-1zM1349 904h1v1h-1zM1384 904h1v1h-1zM1419 904h1v1h-1zM1454 904h1v1h-1zM1489 904h1v1h-1zM1524 904h1v1h-1zM1559 904h1v1h-1zM1594 904h1v1h-1zM1629 904h1v1h-1zM1664 904h1v1h-1zM1699 904h1v1h-1zM1734 904h1v1h-1zM20 927h1v1h-1zM55 927h1v1h-1zM90 927h1v1h-1zM125 927h1v1h-1zM160 927h1v1h-1zM195 927h1v1h-1zM230 927h1v1h-1zM265 927h1v1h-1zM300 927h1v1h-1zM335 927h1v1h-1zM370 927h1v1h-1zM405 927h1v1h-1zM440 927h1v1h-1zM475 927h1v1h-1zM510 927h1v1h-1zM545 927h1v1h-1zM580 927h1v1h-1zM615 927h1v1h-1zM650 927h1v1h-1zM685 927h1v1h-1zM720 927h1v1h-1zM754 927h1v1h-1zM789 927h1v1h-1zM824 927h1v1h-1zM859 927h1v1h-1zM894 927h1v1h-1zM929 927h1v1h-1zM964 927h1v1h-1zM999 927h1v1h-1zM1034 927h1v1h-1zM1069 927h1v1h-1zM1104 927h1v1h-1zM1139 927h1v1h-1zM1174 927h1v1h-1zM1209 927h1v1h-1zM1244 927h1v1h-1zM1279 927h1v1h-1zM1314 927h1v1h-1zM1349 927h1v1h-1zM1384 927h1v1h-1zM1419 927h1v1h-1zM1454 927h1v1h-1zM1489 927h1v1h-1zM1524 927h1v1h-1zM1559 927h1v1h-1zM1594 927h1v1h-1zM1629 927h1v1h-1zM1664 927h1v1h-1zM1699 927h1v1h-1zM1734 927h1v1h-1zM20 973h1v1h-1zM55 973h1v1h-1zM90 973h1v1h-1zM125 973h1v1h-1zM160 973h1v1h-1zM195 973h1v1h-1zM230 973h1v1h-1zM265 973h1v1h-1zM300 973h1v1h-1zM335 973h1v1h-1zM370 973h1v1h-1zM405 973h1v1h-1zM440 973h1v1h-1zM475 973h1v1h-1zM510 973h1v1h-1zM545 973h1v1h-1zM580 973h1v1h-1zM615 973h1v1h-1zM650 973h1v1h-1zM685 973h1v1h-1zM720 973h1v1h-1zM754 973h1v1h-1zM789 973h1v1h-1zM824 973h1v1h-1zM859 973h1v1h-1zM894 973h1v1h-1zM929 973h1v1h-1zM964 973h1v1h-1zM999 973h1v1h-1zM1034 973h1v1h-1zM1069 973h1v1h-1zM1104 973h1v1h-1zM1139 973h1v1h-1zM1174 973h1v1h-1zM1209 973h1v1h-1zM1244 973h1v1h-1zM1279 973h1v1h-1zM1314 973h1v1h-1zM1349 973h1v1h-1zM1384 973h1v1h-1zM1419 973h1v1h-1zM1454 973h1v1h-1zM1489 973h1v1h-1zM1524 973h1v1h-1zM1559 973h1v1h-1zM1594 973h1v1h-1zM1629 973h1v1h-1zM1664 973h1v1h-1zM1699 973h1v1h-1zM1734 973h1v1h-1zM230 58h1v1h-1zM230 63h1v1h-1zM230 67h1v1h-1zM230 72h1v1h-1zM230 76h1v1h-1zM230 81h1v1h-1zM230 86h1v1h-1zM230 90h1v1h-1zM230 95h1v1h-1zM230 99h1v1h-1zM230 104h1v1h-1zM230 109h1v1h-1zM230 114h1v1h-1zM230 118h1v1h-1zM230 123h1v1h-1zM230 128h1v1h-1zM230 133h1v1h-1zM230 137h1v1h-1zM230 142h1v1h-1zM230 146h1v1h-1zM230 151h1v1h-1zM230 156h1v1h-1zM230 160h1v1h-1zM230 165h1v1h-1zM230 169h1v1h-1zM230 174h1v1h-1zM230 179h1v1h-1zM230 183h1v1h-1zM230 188h1v1h-1zM230 192h1v1h-1zM230 197h1v1h-1zM230 202h1v1h-1zM230 207h1v1h-1zM230 211h1v1h-1zM230 216h1v1h-1zM230 221h1v1h-1zM230 226h1v1h-1zM230 230h1v1h-1zM230 235h1v1h-1zM230 239h1v1h-1zM230 244h1v1h-1zM230 249h1v1h-1zM230 253h1v1h-1zM230 258h1v1h-1zM230 262h1v1h-1zM230 267h1v1h-1zM230 272h1v1h-1zM230 276h1v1h-1zM230 281h1v1h-1zM230 285h1v1h-1zM230 292h1v1h-1zM230 297h1v1h-1zM230 301h1v1h-1zM230 306h1v1h-1zM230 310h1v1h-1zM230 315h1v1h-1zM230 320h1v1h-1zM230 324h1v1h-1zM230 329h1v1h-1zM230 333h1v1h-1zM230 338h1v1h-1zM230 343h1v1h-1zM230 348h1v1h-1zM230 352h1v1h-1zM230 357h1v1h-1zM230 362h1v1h-1zM230 367h1v1h-1zM230 371h1v1h-1zM230 376h1v1h-1zM230 380h1v1h-1zM230 385h1v1h-1zM230 390h1v1h-1zM230 394h1v1h-1zM230 399h1v1h-1zM230 403h1v1h-1zM230 408h1v1h-1zM230 413h1v1h-1zM230 417h1v1h-1zM230 422h1v1h-1zM230 426h1v1h-1zM230 431h1v1h-1zM230 436h1v1h-1zM230 440h1v1h-1zM230 445h1v1h-1zM230 449h1v1h-1zM230 454h1v1h-1zM230 459h1v1h-1zM230 464h1v1h-1zM230 468h1v1h-1zM230 473h1v1h-1zM230 478h1v1h-1zM230 483h1v1h-1zM230 487h1v1h-1zM230 492h1v1h-1zM230 496h1v1h-1zM230 501h1v1h-1zM230 506h1v1h-1zM230 510h1v1h-1zM230 515h1v1h-1zM230 520h1v1h-1zM230 526h1v1h-1zM230 531h1v1h-1zM230 535h1v1h-1zM230 540h1v1h-1zM230 544h1v1h-1zM230 549h1v1h-1zM230 554h1v1h-1zM230 558h1v1h-1zM230 563h1v1h-1zM230 567h1v1h-1zM230 572h1v1h-1zM230 577h1v1h-1zM230 582h1v1h-1zM230 586h1v1h-1zM230 591h1v1h-1zM230 596h1v1h-1zM230 601h1v1h-1zM230 605h1v1h-1zM230 610h1v1h-1zM230 614h1v1h-1zM230 619h1v1h-1zM230 624h1v1h-1zM230 628h1v1h-1zM230 633h1v1h-1zM230 637h1v1h-1zM230 642h1v1h-1zM230 647h1v1h-1zM230 651h1v1h-1zM230 656h1v1h-1zM230 660h1v1h-1zM230 665h1v1h-1zM230 670h1v1h-1zM230 674h1v1h-1zM230 679h1v1h-1zM230 683h1v1h-1zM230 688h1v1h-1zM230 693h1v1h-1zM230 698h1v1h-1zM230 702h1v1h-1zM230 707h1v1h-1zM230 712h1v1h-1zM230 717h1v1h-1zM230 721h1v1h-1zM230 726h1v1h-1zM230 730h1v1h-1zM230 735h1v1h-1zM230 740h1v1h-1zM230 744h1v1h-1zM230 749h1v1h-1zM230 754h1v1h-1zM230 764h1v1h-1zM230 769h1v1h-1zM230 773h1v1h-1zM230 778h1v1h-1zM230 782h1v1h-1zM230 787h1v1h-1zM230 792h1v1h-1zM230 796h1v1h-1zM230 801h1v1h-1zM230 805h1v1h-1zM230 810h1v1h-1zM230 815h1v1h-1zM230 820h1v1h-1zM230 824h1v1h-1zM230 829h1v1h-1zM230 834h1v1h-1zM230 839h1v1h-1zM230 843h1v1h-1zM230 848h1v1h-1zM230 852h1v1h-1zM230 857h1v1h-1zM230 862h1v1h-1zM230 866h1v1h-1zM230 871h1v1h-1zM230 875h1v1h-1zM230 880h1v1h-1zM230 885h1v1h-1zM230 890h1v1h-1zM230 894h1v1h-1zM230 899h1v1h-1zM230 904h1v1h-1zM230 909h1v1h-1zM230 913h1v1h-1zM230 918h1v1h-1zM230 922h1v1h-1zM230 927h1v1h-1zM230 932h1v1h-1zM230 936h1v1h-1zM230 941h1v1h-1zM230 945h1v1h-1zM230 950h1v1h-1zM230 955h1v1h-1zM230 959h1v1h-1zM230 964h1v1h-1zM230 968h1v1h-1zM230 973h1v1h-1zM230 978h1v1h-1zM405 58h1v1h-1zM405 63h1v1h-1zM405 67h1v1h-1zM405 72h1v1h-1zM405 76h1v1h-1zM405 81h1v1h-1zM405 86h1v1h-1zM405 90h1v1h-1zM405 95h1v1h-1zM405 99h1v1h-1zM405 104h1v1h-1zM405 109h1v1h-1zM405 114h1v1h-1zM405 118h1v1h-1zM405 123h1v1h-1zM405 128h1v1h-1zM405 133h1v1h-1zM405 137h1v1h-1zM405 142h1v1h-1zM405 146h1v1h-1zM405 151h1v1h-1zM405 156h1v1h-1zM405 160h1v1h-1zM405 165h1v1h-1zM405 169h1v1h-1zM405 174h1v1h-1zM405 179h1v1h-1zM405 183h1v1h-1zM405 188h1v1h-1zM405 192h1v1h-1zM405 197h1v1h-1zM405 202h1v1h-1zM405 207h1v1h-1zM405 211h1v1h-1zM405 216h1v1h-1zM405 221h1v1h-1zM405 226h1v1h-1zM405 230h1v1h-1zM405 235h1v1h-1zM405 239h1v1h-1zM405 244h1v1h-1zM405 249h1v1h-1zM405 253h1v1h-1zM405 258h1v1h-1zM405 262h1v1h-1zM405 267h1v1h-1zM405 272h1v1h-1zM405 276h1v1h-1zM405 281h1v1h-1zM405 285h1v1h-1zM405 292h1v1h-1zM405 297h1v1h-1zM405 301h1v1h-1zM405 306h1v1h-1zM405 310h1v1h-1zM405 315h1v1h-1zM405 320h1v1h-1zM405 324h1v1h-1zM405 329h1v1h-1zM405 333h1v1h-1zM405 338h1v1h-1zM405 343h1v1h-1zM405 348h1v1h-1zM405 352h1v1h-1zM405 357h1v1h-1zM405 362h1v1h-1zM405 367h1v1h-1zM405 371h1v1h-1zM405 376h1v1h-1zM405 380h1v1h-1zM405 385h1v1h-1zM405 390h1v1h-1zM405 394h1v1h-1zM405 399h1v1h-1zM405 403h1v1h-1zM405 408h1v1h-1zM405 413h1v1h-1zM405 417h1v1h-1zM405 422h1v1h-1zM405 426h1v1h-1zM405 431h1v1h-1zM405 436h1v1h-1zM405 440h1v1h-1zM405 445h1v1h-1zM405 449h1v1h-1zM405 454h1v1h-1zM405 459h1v1h-1zM405 464h1v1h-1zM405 468h1v1h-1zM405 473h1v1h-1zM405 478h1v1h-1zM405 483h1v1h-1zM405 487h1v1h-1zM405 492h1v1h-1zM405 496h1v1h-1zM405 501h1v1h-1zM405 506h1v1h-1zM405 510h1v1h-1zM405 515h1v1h-1zM405 520h1v1h-1zM405 526h1v1h-1zM405 531h1v1h-1zM405 535h1v1h-1zM405 540h1v1h-1zM405 544h1v1h-1zM405 549h1v1h-1zM405 554h1v1h-1zM405 558h1v1h-1zM405 563h1v1h-1zM405 567h1v1h-1zM405 572h1v1h-1zM405 577h1v1h-1zM405 582h1v1h-1zM405 586h1v1h-1zM405 591h1v1h-1zM405 596h1v1h-1zM405 601h1v1h-1zM405 605h1v1h-1zM405 610h1v1h-1zM405 614h1v1h-1zM405 619h1v1h-1zM405 624h1v1h-1zM405 628h1v1h-1zM405 633h1v1h-1zM405 637h1v1h-1zM405 642h1v1h-1zM405 647h1v1h-1zM405 651h1v1h-1zM405 656h1v1h-1zM405 660h1v1h-1zM405 665h1v1h-1zM405 670h1v1h-1zM405 674h1v1h-1zM405 679h1v1h-1zM405 683h1v1h-1zM405 688h1v1h-1zM405 693h1v1h-1zM405 698h1v1h-1zM405 702h1v1h-1zM405 707h1v1h-1zM405 712h1v1h-1zM405 717h1v1h-1zM405 721h1v1h-1zM405 726h1v1h-1zM405 730h1v1h-1zM405 735h1v1h-1zM405 740h1v1h-1zM405 744h1v1h-1zM405 749h1v1h-1zM405 754h1v1h-1zM405 764h1v1h-1zM405 769h1v1h-1zM405 773h1v1h-1zM405 778h1v1h-1zM405 782h1v1h-1zM405 787h1v1h-1zM405 792h1v1h-1zM405 796h1v1h-1zM405 801h1v1h-1zM405 805h1v1h-1zM405 810h1v1h-1zM405 815h1v1h-1zM405 820h1v1h-1zM405 824h1v1h-1zM405 829h1v1h-1zM405 834h1v1h-1zM405 839h1v1h-1zM405 843h1v1h-1zM405 848h1v1h-1zM405 852h1v1h-1zM405 857h1v1h-1zM405 862h1v1h-1zM405 866h1v1h-1zM405 871h1v1h-1zM405 875h1v1h-1zM405 880h1v1h-1zM405 885h1v1h-1zM405 890h1v1h-1zM405 894h1v1h-1zM405 899h1v1h-1zM405 904h1v1h-1zM405 909h1v1h-1zM405 913h1v1h-1zM405 918h1v1h-1zM405 922h1v1h-1zM405 927h1v1h-1zM405 932h1v1h-1zM405 936h1v1h-1zM405 941h1v1h-1zM405 945h1v1h-1zM405 950h1v1h-1zM405 955h1v1h-1zM405 959h1v1h-1zM405 964h1v1h-1zM405 968h1v1h-1zM405 973h1v1h-1zM405 978h1v1h-1zM580 58h1v1h-1zM580 63h1v1h-1zM580 67h1v1h-1zM580 72h1v1h-1zM580 76h1v1h-1zM580 81h1v1h-1zM580 86h1v1h-1zM580 90h1v1h-1zM580 95h1v1h-1zM580 99h1v1h-1zM580 104h1v1h-1zM580 109h1v1h-1zM580 114h1v1h-1zM580 118h1v1h-1zM580 123h1v1h-1zM580 128h1v1h-1zM580 133h1v1h-1zM580 137h1v1h-1zM580 142h1v1h-1zM580 146h1v1h-1zM580 151h1v1h-1zM580 156h1v1h-1zM580 160h1v1h-1zM580 165h1v1h-1zM580 169h1v1h-1zM580 174h1v1h-1zM580 179h1v1h-1zM580 183h1v1h-1zM580 188h1v1h-1zM580 192h1v1h-1zM580 197h1v1h-1zM580 202h1v1h-1zM580 207h1v1h-1zM580 211h1v1h-1zM580 216h1v1h-1zM580 221h1v1h-1zM580 226h1v1h-1zM580 230h1v1h-1zM580 235h1v1h-1zM580 239h1v1h-1zM580 244h1v1h-1zM580 249h1v1h-1zM580 253h1v1h-1zM580 258h1v1h-1zM580 262h1v1h-1zM580 267h1v1h-1zM580 272h1v1h-1zM580 276h1v1h-1zM580 281h1v1h-1zM580 285h1v1h-1zM580 292h1v1h-1zM580 297h1v1h-1zM580 301h1v1h-1zM580 306h1v1h-1zM580 310h1v1h-1zM580 315h1v1h-1zM580 320h1v1h-1zM580 324h1v1h-1zM580 329h1v1h-1zM580 333h1v1h-1zM580 338h1v1h-1zM580 343h1v1h-1zM580 348h1v1h-1zM580 352h1v1h-1zM580 357h1v1h-1zM580 362h1v1h-1zM580 367h1v1h-1zM580 371h1v1h-1zM580 376h1v1h-1zM580 380h1v1h-1zM580 385h1v1h-1zM580 390h1v1h-1zM580 394h1v1h-1zM580 399h1v1h-1zM580 403h1v1h-1zM580 408h1v1h-1zM580 413h1v1h-1zM580 417h1v1h-1zM580 422h1v1h-1zM580 426h1v1h-1zM580 431h1v1h-1zM580 436h1v1h-1zM580 440h1v1h-1zM580 445h1v1h-1zM580 449h1v1h-1zM580 454h1v1h-1zM580 459h1v1h-1zM580 464h1v1h-1zM580 468h1v1h-1zM580 473h1v1h-1zM580 478h1v1h-1zM580 483h1v1h-1zM580 487h1v1h-1zM580 492h1v1h-1zM580 496h1v1h-1zM580 501h1v1h-1zM580 506h1v1h-1zM580 510h1v1h-1zM580 515h1v1h-1zM580 520h1v1h-1zM580 526h1v1h-1zM580 531h1v1h-1zM580 535h1v1h-1zM580 540h1v1h-1zM580 544h1v1h-1zM580 549h1v1h-1zM580 554h1v1h-1zM580 558h1v1h-1zM580 563h1v1h-1zM580 567h1v1h-1zM580 572h1v1h-1zM580 577h1v1h-1zM580 582h1v1h-1zM580 586h1v1h-1zM580 591h1v1h-1zM580 596h1v1h-1zM580 601h1v1h-1zM580 605h1v1h-1zM580 610h1v1h-1zM580 614h1v1h-1zM580 619h1v1h-1zM580 624h1v1h-1zM580 628h1v1h-1zM580 633h1v1h-1zM580 637h1v1h-1zM580 642h1v1h-1zM580 647h1v1h-1zM580 651h1v1h-1zM580 656h1v1h-1zM580 660h1v1h-1zM580 665h1v1h-1zM580 670h1v1h-1zM580 674h1v1h-1zM580 679h1v1h-1zM580 683h1v1h-1zM580 688h1v1h-1zM580 693h1v1h-1zM580 698h1v1h-1zM580 702h1v1h-1zM580 707h1v1h-1zM580 712h1v1h-1zM580 717h1v1h-1zM580 721h1v1h-1zM580 726h1v1h-1zM580 730h1v1h-1zM580 735h1v1h-1zM580 740h1v1h-1zM580 744h1v1h-1zM580 749h1v1h-1zM580 754h1v1h-1zM580 764h1v1h-1zM580 769h1v1h-1zM580 773h1v1h-1zM580 778h1v1h-1zM580 782h1v1h-1zM580 787h1v1h-1zM580 792h1v1h-1zM580 796h1v1h-1zM580 801h1v1h-1zM580 805h1v1h-1zM580 810h1v1h-1zM580 815h1v1h-1zM580 820h1v1h-1zM580 824h1v1h-1zM580 829h1v1h-1zM580 834h1v1h-1zM580 839h1v1h-1zM580 843h1v1h-1zM580 848h1v1h-1zM580 852h1v1h-1zM580 857h1v1h-1zM580 862h1v1h-1zM580 866h1v1h-1zM580 871h1v1h-1zM580 875h1v1h-1zM580 880h1v1h-1zM580 885h1v1h-1zM580 890h1v1h-1zM580 894h1v1h-1zM580 899h1v1h-1zM580 904h1v1h-1zM580 909h1v1h-1zM580 913h1v1h-1zM580 918h1v1h-1zM580 922h1v1h-1zM580 927h1v1h-1zM580 932h1v1h-1zM580 936h1v1h-1zM580 941h1v1h-1zM580 945h1v1h-1zM580 950h1v1h-1zM580 955h1v1h-1zM580 959h1v1h-1zM580 964h1v1h-1zM580 968h1v1h-1zM580 973h1v1h-1zM580 978h1v1h-1zM754 58h1v1h-1zM754 63h1v1h-1zM754 67h1v1h-1zM754 72h1v1h-1zM754 76h1v1h-1zM754 81h1v1h-1zM754 86h1v1h-1zM754 90h1v1h-1zM754 95h1v1h-1zM754 99h1v1h-1zM754 104h1v1h-1zM754 109h1v1h-1zM754 114h1v1h-1zM754 118h1v1h-1zM754 123h1v1h-1zM754 128h1v1h-1zM754 133h1v1h-1zM754 137h1v1h-1zM754 142h1v1h-1zM754 146h1v1h-1zM754 151h1v1h-1zM754 156h1v1h-1zM754 160h1v1h-1zM754 165h1v1h-1zM754 169h1v1h-1zM754 174h1v1h-1zM754 179h1v1h-1zM754 183h1v1h-1zM754 188h1v1h-1zM754 192h1v1h-1zM754 197h1v1h-1zM754 202h1v1h-1zM754 207h1v1h-1zM754 211h1v1h-1zM754 216h1v1h-1zM754 221h1v1h-1zM754 226h1v1h-1zM754 230h1v1h-1zM754 235h1v1h-1zM754 239h1v1h-1zM754 244h1v1h-1zM754 249h1v1h-1zM754 253h1v1h-1zM754 258h1v1h-1zM754 262h1v1h-1zM754 267h1v1h-1zM754 272h1v1h-1zM754 276h1v1h-1zM754 281h1v1h-1zM754 285h1v1h-1zM754 292h1v1h-1zM754 297h1v1h-1zM754 301h1v1h-1zM754 306h1v1h-1zM754 310h1v1h-1zM754 315h1v1h-1zM754 320h1v1h-1zM754 324h1v1h-1zM754 329h1v1h-1zM754 333h1v1h-1zM754 338h1v1h-1zM754 343h1v1h-1zM754 348h1v1h-1zM754 352h1v1h-1zM754 357h1v1h-1zM754 362h1v1h-1zM754 367h1v1h-1zM754 371h1v1h-1zM754 376h1v1h-1zM754 380h1v1h-1zM754 385h1v1h-1zM754 390h1v1h-1zM754 394h1v1h-1zM754 399h1v1h-1zM754 403h1v1h-1zM754 408h1v1h-1zM754 413h1v1h-1zM754 417h1v1h-1zM754 422h1v1h-1zM754 426h1v1h-1zM754 431h1v1h-1zM754 436h1v1h-1zM754 440h1v1h-1zM754 445h1v1h-1zM754 449h1v1h-1zM754 454h1v1h-1zM754 459h1v1h-1zM754 464h1v1h-1zM754 468h1v1h-1zM754 473h1v1h-1zM754 478h1v1h-1zM754 483h1v1h-1zM754 487h1v1h-1zM754 492h1v1h-1zM754 496h1v1h-1zM754 501h1v1h-1zM754 506h1v1h-1zM754 510h1v1h-1zM754 515h1v1h-1zM754 520h1v1h-1zM754 526h1v1h-1zM754 531h1v1h-1zM754 535h1v1h-1zM754 540h1v1h-1zM754 544h1v1h-1zM754 549h1v1h-1zM754 554h1v1h-1zM754 558h1v1h-1zM754 563h1v1h-1zM754 567h1v1h-1zM754 572h1v1h-1zM754 577h1v1h-1zM754 582h1v1h-1zM754 586h1v1h-1zM754 591h1v1h-1zM754 596h1v1h-1zM754 601h1v1h-1zM754 605h1v1h-1zM754 610h1v1h-1zM754 614h1v1h-1zM754 619h1v1h-1zM754 624h1v1h-1zM754 628h1v1h-1zM754 633h1v1h-1zM754 637h1v1h-1zM754 642h1v1h-1zM754 647h1v1h-1zM754 651h1v1h-1zM754 656h1v1h-1zM754 660h1v1h-1zM754 665h1v1h-1zM754 670h1v1h-1zM754 674h1v1h-1zM754 679h1v1h-1zM754 683h1v1h-1zM754 688h1v1h-1zM754 693h1v1h-1zM754 698h1v1h-1zM754 702h1v1h-1zM754 707h1v1h-1zM754 712h1v1h-1zM754 717h1v1h-1zM754 721h1v1h-1zM754 726h1v1h-1zM754 730h1v1h-1zM754 735h1v1h-1zM754 740h1v1h-1zM754 744h1v1h-1zM754 749h1v1h-1zM754 754h1v1h-1zM754 764h1v1h-1zM754 769h1v1h-1zM754 773h1v1h-1zM754 778h1v1h-1zM754 782h1v1h-1zM754 787h1v1h-1zM754 792h1v1h-1zM754 796h1v1h-1zM754 801h1v1h-1zM754 805h1v1h-1zM754 810h1v1h-1zM754 815h1v1h-1zM754 820h1v1h-1zM754 824h1v1h-1zM754 829h1v1h-1zM754 834h1v1h-1zM754 839h1v1h-1zM754 843h1v1h-1zM754 848h1v1h-1zM754 852h1v1h-1zM754 857h1v1h-1zM754 862h1v1h-1zM754 866h1v1h-1zM754 871h1v1h-1zM754 875h1v1h-1zM754 880h1v1h-1zM754 885h1v1h-1zM754 890h1v1h-1zM754 894h1v1h-1zM754 899h1v1h-1zM754 904h1v1h-1zM754 909h1v1h-1zM754 913h1v1h-1zM754 918h1v1h-1zM754 922h1v1h-1zM754 927h1v1h-1zM754 932h1v1h-1zM754 936h1v1h-1zM754 941h1v1h-1zM754 945h1v1h-1zM754 950h1v1h-1zM754 955h1v1h-1zM754 959h1v1h-1zM754 964h1v1h-1zM754 968h1v1h-1zM754 973h1v1h-1zM754 978h1v1h-1zM929 58h1v1h-1zM929 63h1v1h-1zM929 67h1v1h-1zM929 72h1v1h-1zM929 76h1v1h-1zM929 81h1v1h-1zM929 86h1v1h-1zM929 90h1v1h-1zM929 95h1v1h-1zM929 99h1v1h-1zM929 104h1v1h-1zM929 109h1v1h-1zM929 114h1v1h-1zM929 118h1v1h-1zM929 123h1v1h-1zM929 128h1v1h-1zM929 133h1v1h-1zM929 137h1v1h-1zM929 142h1v1h-1zM929 146h1v1h-1zM929 151h1v1h-1zM929 156h1v1h-1zM929 160h1v1h-1zM929 165h1v1h-1zM929 169h1v1h-1zM929 174h1v1h-1zM929 179h1v1h-1zM929 183h1v1h-1zM929 188h1v1h-1zM929 192h1v1h-1zM929 197h1v1h-1zM929 202h1v1h-1zM929 207h1v1h-1zM929 211h1v1h-1zM929 216h1v1h-1zM929 221h1v1h-1zM929 226h1v1h-1zM929 230h1v1h-1zM929 235h1v1h-1zM929 239h1v1h-1zM929 244h1v1h-1zM929 249h1v1h-1zM929 253h1v1h-1zM929 258h1v1h-1zM929 262h1v1h-1zM929 267h1v1h-1zM929 272h1v1h-1zM929 276h1v1h-1zM929 281h1v1h-1zM929 285h1v1h-1zM929 292h1v1h-1zM929 297h1v1h-1zM929 301h1v1h-1zM929 306h1v1h-1zM929 310h1v1h-1zM929 315h1v1h-1zM929 320h1v1h-1zM929 324h1v1h-1zM929 329h1v1h-1zM929 333h1v1h-1zM929 338h1v1h-1zM929 343h1v1h-1zM929 348h1v1h-1zM929 352h1v1h-1zM929 357h1v1h-1zM929 362h1v1h-1zM929 367h1v1h-1zM929 371h1v1h-1zM929 376h1v1h-1zM929 380h1v1h-1zM929 385h1v1h-1zM929 390h1v1h-1zM929 394h1v1h-1zM929 399h1v1h-1zM929 403h1v1h-1zM929 408h1v1h-1zM929 413h1v1h-1zM929 417h1v1h-1zM929 422h1v1h-1zM929 426h1v1h-1zM929 431h1v1h-1zM929 436h1v1h-1zM929 440h1v1h-1zM929 445h1v1h-1zM929 449h1v1h-1zM929 454h1v1h-1zM929 459h1v1h-1zM929 464h1v1h-1zM929 468h1v1h-1zM929 473h1v1h-1zM929 478h1v1h-1zM929 483h1v1h-1zM929 487h1v1h-1zM929 492h1v1h-1zM929 496h1v1h-1zM929 501h1v1h-1zM929 506h1v1h-1zM929 510h1v1h-1zM929 515h1v1h-1zM929 520h1v1h-1zM929 526h1v1h-1zM929 531h1v1h-1zM929 535h1v1h-1zM929 540h1v1h-1zM929 544h1v1h-1zM929 549h1v1h-1zM929 554h1v1h-1zM929 558h1v1h-1zM929 563h1v1h-1zM929 567h1v1h-1zM929 572h1v1h-1zM929 577h1v1h-1zM929 582h1v1h-1zM929 586h1v1h-1zM929 591h1v1h-1zM929 596h1v1h-1zM929 601h1v1h-1zM929 605h1v1h-1zM929 610h1v1h-1zM929 614h1v1h-1zM929 619h1v1h-1zM929 624h1v1h-1zM929 628h1v1h-1zM929 633h1v1h-1zM929 637h1v1h-1zM929 642h1v1h-1zM929 647h1v1h-1zM929 651h1v1h-1zM929 656h1v1h-1zM929 660h1v1h-1zM929 665h1v1h-1zM929 670h1v1h-1zM929 674h1v1h-1zM929 679h1v1h-1zM929 683h1v1h-1zM929 688h1v1h-1zM929 693h1v1h-1zM929 698h1v1h-1zM929 702h1v1h-1zM929 707h1v1h-1zM929 712h1v1h-1zM929 717h1v1h-1zM929 721h1v1h-1zM929 726h1v1h-1zM929 730h1v1h-1zM929 735h1v1h-1zM929 740h1v1h-1zM929 744h1v1h-1zM929 749h1v1h-1zM929 754h1v1h-1zM929 764h1v1h-1zM929 769h1v1h-1zM929 773h1v1h-1zM929 778h1v1h-1zM929 782h1v1h-1zM929 787h1v1h-1zM929 792h1v1h-1zM929 796h1v1h-1zM929 801h1v1h-1zM929 805h1v1h-1zM929 810h1v1h-1zM929 815h1v1h-1zM929 820h1v1h-1zM929 824h1v1h-1zM929 829h1v1h-1zM929 834h1v1h-1zM929 839h1v1h-1zM929 843h1v1h-1zM929 848h1v1h-1zM929 852h1v1h-1zM929 857h1v1h-1zM929 862h1v1h-1zM929 866h1v1h-1zM929 871h1v1h-1zM929 875h1v1h-1zM929 880h1v1h-1zM929 885h1v1h-1zM929 890h1v1h-1zM929 894h1v1h-1zM929 899h1v1h-1zM929 904h1v1h-1zM929 909h1v1h-1zM929 913h1v1h-1zM929 918h1v1h-1zM929 922h1v1h-1zM929 927h1v1h-1zM929 932h1v1h-1zM929 936h1v1h-1zM929 941h1v1h-1zM929 945h1v1h-1zM929 950h1v1h-1zM929 955h1v1h-1zM929 959h1v1h-1zM929 964h1v1h-1zM929 968h1v1h-1zM929 973h1v1h-1zM929 978h1v1h-1zM1104 58h1v1h-1zM1104 63h1v1h-1zM1104 67h1v1h-1zM1104 72h1v1h-1zM1104 76h1v1h-1zM1104 81h1v1h-1zM1104 86h1v1h-1zM1104 90h1v1h-1zM1104 95h1v1h-1zM1104 99h1v1h-1zM1104 104h1v1h-1zM1104 109h1v1h-1zM1104 114h1v1h-1zM1104 118h1v1h-1zM1104 123h1v1h-1zM1104 128h1v1h-1zM1104 133h1v1h-1zM1104 137h1v1h-1zM1104 142h1v1h-1zM1104 146h1v1h-1zM1104 151h1v1h-1zM1104 156h1v1h-1zM1104 160h1v1h-1zM1104 165h1v1h-1zM1104 169h1v1h-1zM1104 174h1v1h-1zM1104 179h1v1h-1zM1104 183h1v1h-1zM1104 188h1v1h-1zM1104 192h1v1h-1zM1104 197h1v1h-1zM1104 202h1v1h-1zM1104 207h1v1h-1zM1104 211h1v1h-1zM1104 216h1v1h-1zM1104 221h1v1h-1zM1104 226h1v1h-1zM1104 230h1v1h-1zM1104 235h1v1h-1zM1104 239h1v1h-1zM1104 244h1v1h-1zM1104 249h1v1h-1zM1104 253h1v1h-1zM1104 258h1v1h-1zM1104 262h1v1h-1zM1104 267h1v1h-1zM1104 272h1v1h-1zM1104 276h1v1h-1zM1104 281h1v1h-1zM1104 285h1v1h-1zM1104 292h1v1h-1zM1104 297h1v1h-1zM1104 301h1v1h-1zM1104 306h1v1h-1zM1104 310h1v1h-1zM1104 315h1v1h-1zM1104 320h1v1h-1zM1104 324h1v1h-1zM1104 329h1v1h-1zM1104 333h1v1h-1zM1104 338h1v1h-1zM1104 343h1v1h-1zM1104 348h1v1h-1zM1104 352h1v1h-1zM1104 357h1v1h-1zM1104 362h1v1h-1zM1104 367h1v1h-1zM1104 371h1v1h-1zM1104 376h1v1h-1zM1104 380h1v1h-1zM1104 385h1v1h-1zM1104 390h1v1h-1zM1104 394h1v1h-1zM1104 399h1v1h-1zM1104 403h1v1h-1zM1104 408h1v1h-1zM1104 413h1v1h-1zM1104 417h1v1h-1zM1104 422h1v1h-1zM1104 426h1v1h-1zM1104 431h1v1h-1zM1104 436h1v1h-1zM1104 440h1v1h-1zM1104 445h1v1h-1zM1104 449h1v1h-1zM1104 454h1v1h-1zM1104 459h1v1h-1zM1104 464h1v1h-1zM1104 468h1v1h-1zM1104 473h1v1h-1zM1104 478h1v1h-1zM1104 483h1v1h-1zM1104 487h1v1h-1zM1104 492h1v1h-1zM1104 496h1v1h-1zM1104 501h1v1h-1zM1104 506h1v1h-1zM1104 510h1v1h-1zM1104 515h1v1h-1zM1104 520h1v1h-1zM1104 526h1v1h-1zM1104 531h1v1h-1zM1104 535h1v1h-1zM1104 540h1v1h-1zM1104 544h1v1h-1zM1104 549h1v1h-1zM1104 554h1v1h-1zM1104 558h1v1h-1zM1104 563h1v1h-1zM1104 567h1v1h-1zM1104 572h1v1h-1zM1104 577h1v1h-1zM1104 582h1v1h-1zM1104 586h1v1h-1zM1104 591h1v1h-1zM1104 596h1v1h-1zM1104 601h1v1h-1zM1104 605h1v1h-1zM1104 610h1v1h-1zM1104 614h1v1h-1zM1104 619h1v1h-1zM1104 624h1v1h-1zM1104 628h1v1h-1zM1104 633h1v1h-1zM1104 637h1v1h-1zM1104 642h1v1h-1zM1104 647h1v1h-1zM1104 651h1v1h-1zM1104 656h1v1h-1zM1104 660h1v1h-1zM1104 665h1v1h-1zM1104 670h1v1h-1zM1104 674h1v1h-1zM1104 679h1v1h-1zM1104 683h1v1h-1zM1104 688h1v1h-1zM1104 693h1v1h-1zM1104 698h1v1h-1zM1104 702h1v1h-1zM1104 707h1v1h-1zM1104 712h1v1h-1zM1104 717h1v1h-1zM1104 721h1v1h-1zM1104 726h1v1h-1zM1104 730h1v1h-1zM1104 735h1v1h-1zM1104 740h1v1h-1zM1104 744h1v1h-1zM1104 749h1v1h-1zM1104 754h1v1h-1zM1104 764h1v1h-1zM1104 769h1v1h-1zM1104 773h1v1h-1zM1104 778h1v1h-1zM1104 782h1v1h-1zM1104 787h1v1h-1zM1104 792h1v1h-1zM1104 796h1v1h-1zM1104 801h1v1h-1zM1104 805h1v1h-1zM1104 810h1v1h-1zM1104 815h1v1h-1zM1104 820h1v1h-1zM1104 824h1v1h-1zM1104 829h1v1h-1zM1104 834h1v1h-1zM1104 839h1v1h-1zM1104 843h1v1h-1zM1104 848h1v1h-1zM1104 852h1v1h-1zM1104 857h1v1h-1zM1104 862h1v1h-1zM1104 866h1v1h-1zM1104 871h1v1h-1zM1104 875h1v1h-1zM1104 880h1v1h-1zM1104 885h1v1h-1zM1104 890h1v1h-1zM1104 894h1v1h-1zM1104 899h1v1h-1zM1104 904h1v1h-1zM1104 909h1v1h-1zM1104 913h1v1h-1zM1104 918h1v1h-1zM1104 922h1v1h-1zM1104 927h1v1h-1zM1104 932h1v1h-1zM1104 936h1v1h-1zM1104 941h1v1h-1zM1104 945h1v1h-1zM1104 950h1v1h-1zM1104 955h1v1h-1zM1104 959h1v1h-1zM1104 964h1v1h-1zM1104 968h1v1h-1zM1104 973h1v1h-1zM1104 978h1v1h-1zM1279 58h1v1h-1zM1279 63h1v1h-1zM1279 67h1v1h-1zM1279 72h1v1h-1zM1279 76h1v1h-1zM1279 81h1v1h-1zM1279 86h1v1h-1zM1279 90h1v1h-1zM1279 95h1v1h-1zM1279 99h1v1h-1zM1279 104h1v1h-1zM1279 109h1v1h-1zM1279 114h1v1h-1zM1279 118h1v1h-1zM1279 123h1v1h-1zM1279 128h1v1h-1zM1279 133h1v1h-1zM1279 137h1v1h-1zM1279 142h1v1h-1zM1279 146h1v1h-1zM1279 151h1v1h-1zM1279 156h1v1h-1zM1279 160h1v1h-1zM1279 165h1v1h-1zM1279 169h1v1h-1zM1279 174h1v1h-1zM1279 179h1v1h-1zM1279 183h1v1h-1zM1279 188h1v1h-1zM1279 192h1v1h-1zM1279 197h1v1h-1zM1279 202h1v1h-1zM1279 207h1v1h-1zM1279 211h1v1h-1zM1279 216h1v1h-1zM1279 221h1v1h-1zM1279 226h1v1h-1zM1279 230h1v1h-1zM1279 235h1v1h-1zM1279 239h1v1h-1zM1279 244h1v1h-1zM1279 249h1v1h-1zM1279 253h1v1h-1zM1279 258h1v1h-1zM1279 262h1v1h-1zM1279 267h1v1h-1zM1279 272h1v1h-1zM1279 276h1v1h-1zM1279 281h1v1h-1zM1279 285h1v1h-1zM1279 292h1v1h-1zM1279 297h1v1h-1zM1279 301h1v1h-1zM1279 306h1v1h-1zM1279 310h1v1h-1zM1279 315h1v1h-1zM1279 320h1v1h-1zM1279 324h1v1h-1zM1279 329h1v1h-1zM1279 333h1v1h-1zM1279 338h1v1h-1zM1279 343h1v1h-1zM1279 348h1v1h-1zM1279 352h1v1h-1zM1279 357h1v1h-1zM1279 362h1v1h-1zM1279 367h1v1h-1zM1279 371h1v1h-1zM1279 376h1v1h-1zM1279 380h1v1h-1zM1279 385h1v1h-1zM1279 390h1v1h-1zM1279 394h1v1h-1zM1279 399h1v1h-1zM1279 403h1v1h-1zM1279 408h1v1h-1zM1279 413h1v1h-1zM1279 417h1v1h-1zM1279 422h1v1h-1zM1279 426h1v1h-1zM1279 431h1v1h-1zM1279 436h1v1h-1zM1279 440h1v1h-1zM1279 445h1v1h-1zM1279 449h1v1h-1zM1279 454h1v1h-1zM1279 459h1v1h-1zM1279 464h1v1h-1zM1279 468h1v1h-1zM1279 473h1v1h-1zM1279 478h1v1h-1zM1279 483h1v1h-1zM1279 487h1v1h-1zM1279 492h1v1h-1zM1279 496h1v1h-1zM1279 501h1v1h-1zM1279 506h1v1h-1zM1279 510h1v1h-1zM1279 515h1v1h-1zM1279 520h1v1h-1zM1279 526h1v1h-1zM1279 531h1v1h-1zM1279 535h1v1h-1zM1279 540h1v1h-1zM1279 544h1v1h-1zM1279 549h1v1h-1zM1279 554h1v1h-1zM1279 558h1v1h-1zM1279 563h1v1h-1zM1279 567h1v1h-1zM1279 572h1v1h-1zM1279 577h1v1h-1zM1279 582h1v1h-1zM1279 586h1v1h-1zM1279 591h1v1h-1zM1279 596h1v1h-1zM1279 601h1v1h-1zM1279 605h1v1h-1zM1279 610h1v1h-1zM1279 614h1v1h-1zM1279 619h1v1h-1zM1279 624h1v1h-1zM1279 628h1v1h-1zM1279 633h1v1h-1zM1279 637h1v1h-1zM1279 642h1v1h-1zM1279 647h1v1h-1zM1279 651h1v1h-1zM1279 656h1v1h-1zM1279 660h1v1h-1zM1279 665h1v1h-1zM1279 670h1v1h-1zM1279 674h1v1h-1zM1279 679h1v1h-1zM1279 683h1v1h-1zM1279 688h1v1h-1zM1279 693h1v1h-1zM1279 698h1v1h-1zM1279 702h1v1h-1zM1279 707h1v1h-1zM1279 712h1v1h-1zM1279 717h1v1h-1zM1279 721h1v1h-1zM1279 726h1v1h-1zM1279 730h1v1h-1zM1279 735h1v1h-1zM1279 740h1v1h-1zM1279 744h1v1h-1zM1279 749h1v1h-1zM1279 754h1v1h-1zM1279 764h1v1h-1zM1279 769h1v1h-1zM1279 773h1v1h-1zM1279 778h1v1h-1zM1279 782h1v1h-1zM1279 787h1v1h-1zM1279 792h1v1h-1zM1279 796h1v1h-1zM1279 801h1v1h-1zM1279 805h1v1h-1zM1279 810h1v1h-1zM1279 815h1v1h-1zM1279 820h1v1h-1zM1279 824h1v1h-1zM1279 829h1v1h-1zM1279 834h1v1h-1zM1279 839h1v1h-1zM1279 843h1v1h-1zM1279 848h1v1h-1zM1279 852h1v1h-1zM1279 857h1v1h-1zM1279 862h1v1h-1zM1279 866h1v1h-1zM1279 871h1v1h-1zM1279 875h1v1h-1zM1279 880h1v1h-1zM1279 885h1v1h-1zM1279 890h1v1h-1zM1279 894h1v1h-1zM1279 899h1v1h-1zM1279 904h1v1h-1zM1279 909h1v1h-1zM1279 913h1v1h-1zM1279 918h1v1h-1zM1279 922h1v1h-1zM1279 927h1v1h-1zM1279 932h1v1h-1zM1279 936h1v1h-1zM1279 941h1v1h-1zM1279 945h1v1h-1zM1279 950h1v1h-1zM1279 955h1v1h-1zM1279 959h1v1h-1zM1279 964h1v1h-1zM1279 968h1v1h-1zM1279 973h1v1h-1zM1279 978h1v1h-1zM1454 58h1v1h-1zM1454 63h1v1h-1zM1454 67h1v1h-1zM1454 72h1v1h-1zM1454 76h1v1h-1zM1454 81h1v1h-1zM1454 86h1v1h-1zM1454 90h1v1h-1zM1454 95h1v1h-1zM1454 99h1v1h-1zM1454 104h1v1h-1zM1454 109h1v1h-1zM1454 114h1v1h-1zM1454 118h1v1h-1zM1454 123h1v1h-1zM1454 128h1v1h-1zM1454 133h1v1h-1zM1454 137h1v1h-1zM1454 142h1v1h-1zM1454 146h1v1h-1zM1454 151h1v1h-1zM1454 156h1v1h-1zM1454 160h1v1h-1zM1454 165h1v1h-1zM1454 169h1v1h-1zM1454 174h1v1h-1zM1454 179h1v1h-1zM1454 183h1v1h-1zM1454 188h1v1h-1zM1454 192h1v1h-1zM1454 197h1v1h-1zM1454 202h1v1h-1zM1454 207h1v1h-1zM1454 211h1v1h-1zM1454 216h1v1h-1zM1454 221h1v1h-1zM1454 226h1v1h-1zM1454 230h1v1h-1zM1454 235h1v1h-1zM1454 239h1v1h-1zM1454 244h1v1h-1zM1454 249h1v1h-1zM1454 253h1v1h-1zM1454 258h1v1h-1zM1454 262h1v1h-1zM1454 267h1v1h-1zM1454 272h1v1h-1zM1454 276h1v1h-1zM1454 281h1v1h-1zM1454 285h1v1h-1zM1454 292h1v1h-1zM1454 297h1v1h-1zM1454 301h1v1h-1zM1454 306h1v1h-1zM1454 310h1v1h-1zM1454 315h1v1h-1zM1454 320h1v1h-1zM1454 324h1v1h-1zM1454 329h1v1h-1zM1454 333h1v1h-1zM1454 338h1v1h-1zM1454 343h1v1h-1zM1454 348h1v1h-1zM1454 352h1v1h-1zM1454 357h1v1h-1zM1454 362h1v1h-1zM1454 367h1v1h-1zM1454 371h1v1h-1zM1454 376h1v1h-1zM1454 380h1v1h-1zM1454 385h1v1h-1zM1454 390h1v1h-1zM1454 394h1v1h-1zM1454 399h1v1h-1zM1454 403h1v1h-1zM1454 408h1v1h-1zM1454 413h1v1h-1zM1454 417h1v1h-1zM1454 422h1v1h-1zM1454 426h1v1h-1zM1454 431h1v1h-1zM1454 436h1v1h-1zM1454 440h1v1h-1zM1454 445h1v1h-1zM1454 449h1v1h-1zM1454 454h1v1h-1zM1454 459h1v1h-1zM1454 464h1v1h-1zM1454 468h1v1h-1zM1454 473h1v1h-1zM1454 478h1v1h-1zM1454 483h1v1h-1zM1454 487h1v1h-1zM1454 492h1v1h-1zM1454 496h1v1h-1zM1454 501h1v1h-1zM1454 506h1v1h-1zM1454 510h1v1h-1zM1454 515h1v1h-1zM1454 520h1v1h-1zM1454 526h1v1h-1zM1454 531h1v1h-1zM1454 535h1v1h-1zM1454 540h1v1h-1zM1454 544h1v1h-1zM1454 549h1v1h-1zM1454 554h1v1h-1zM1454 558h1v1h-1zM1454 563h1v1h-1zM1454 567h1v1h-1zM1454 572h1v1h-1zM1454 577h1v1h-1zM1454 582h1v1h-1zM1454 586h1v1h-1zM1454 591h1v1h-1zM1454 596h1v1h-1zM1454 601h1v1h-1zM1454 605h1v1h-1zM1454 610h1v1h-1zM1454 614h1v1h-1zM1454 619h1v1h-1zM1454 624h1v1h-1zM1454 628h1v1h-1zM1454 633h1v1h-1zM1454 637h1v1h-1zM1454 642h1v1h-1zM1454 647h1v1h-1zM1454 651h1v1h-1zM1454 656h1v1h-1zM1454 660h1v1h-1zM1454 665h1v1h-1zM1454 670h1v1h-1zM1454 674h1v1h-1zM1454 679h1v1h-1zM1454 683h1v1h-1zM1454 688h1v1h-1zM1454 693h1v1h-1zM1454 698h1v1h-1zM1454 702h1v1h-1zM1454 707h1v1h-1zM1454 712h1v1h-1zM1454 717h1v1h-1zM1454 721h1v1h-1zM1454 726h1v1h-1zM1454 730h1v1h-1zM1454 735h1v1h-1zM1454 740h1v1h-1zM1454 744h1v1h-1zM1454 749h1v1h-1zM1454 754h1v1h-1zM1454 764h1v1h-1zM1454 769h1v1h-1zM1454 773h1v1h-1zM1454 778h1v1h-1zM1454 782h1v1h-1zM1454 787h1v1h-1zM1454 792h1v1h-1zM1454 796h1v1h-1zM1454 801h1v1h-1zM1454 805h1v1h-1zM1454 810h1v1h-1zM1454 815h1v1h-1zM1454 820h1v1h-1zM1454 824h1v1h-1zM1454 829h1v1h-1zM1454 834h1v1h-1zM1454 839h1v1h-1zM1454 843h1v1h-1zM1454 848h1v1h-1zM1454 852h1v1h-1zM1454 857h1v1h-1zM1454 862h1v1h-1zM1454 866h1v1h-1zM1454 871h1v1h-1zM1454 875h1v1h-1zM1454 880h1v1h-1zM1454 885h1v1h-1zM1454 890h1v1h-1zM1454 894h1v1h-1zM1454 899h1v1h-1zM1454 904h1v1h-1zM1454 909h1v1h-1zM1454 913h1v1h-1zM1454 918h1v1h-1zM1454 922h1v1h-1zM1454 927h1v1h-1zM1454 932h1v1h-1zM1454 936h1v1h-1zM1454 941h1v1h-1zM1454 945h1v1h-1zM1454 950h1v1h-1zM1454 955h1v1h-1zM1454 959h1v1h-1zM1454 964h1v1h-1zM1454 968h1v1h-1zM1454 973h1v1h-1zM1454 978h1v1h-1zM1629 58h1v1h-1zM1629 63h1v1h-1zM1629 67h1v1h-1zM1629 72h1v1h-1zM1629 76h1v1h-1zM1629 81h1v1h-1zM1629 86h1v1h-1zM1629 90h1v1h-1zM1629 95h1v1h-1zM1629 99h1v1h-1zM1629 104h1v1h-1zM1629 109h1v1h-1zM1629 114h1v1h-1zM1629 118h1v1h-1zM1629 123h1v1h-1zM1629 128h1v1h-1zM1629 133h1v1h-1zM1629 137h1v1h-1zM1629 142h1v1h-1zM1629 146h1v1h-1zM1629 151h1v1h-1zM1629 156h1v1h-1zM1629 160h1v1h-1zM1629 165h1v1h-1zM1629 169h1v1h-1zM1629 174h1v1h-1zM1629 179h1v1h-1zM1629 183h1v1h-1zM1629 188h1v1h-1zM1629 192h1v1h-1zM1629 197h1v1h-1zM1629 202h1v1h-1zM1629 207h1v1h-1zM1629 211h1v1h-1zM1629 216h1v1h-1zM1629 221h1v1h-1zM1629 226h1v1h-1zM1629 230h1v1h-1zM1629 235h1v1h-1zM1629 239h1v1h-1zM1629 244h1v1h-1zM1629 249h1v1h-1zM1629 253h1v1h-1zM1629 258h1v1h-1zM1629 262h1v1h-1zM1629 267h1v1h-1zM1629 272h1v1h-1zM1629 276h1v1h-1zM1629 281h1v1h-1zM1629 285h1v1h-1zM1629 292h1v1h-1zM1629 297h1v1h-1zM1629 301h1v1h-1zM1629 306h1v1h-1zM1629 310h1v1h-1zM1629 315h1v1h-1zM1629 320h1v1h-1zM1629 324h1v1h-1zM1629 329h1v1h-1zM1629 333h1v1h-1zM1629 338h1v1h-1zM1629 343h1v1h-1zM1629 348h1v1h-1zM1629 352h1v1h-1zM1629 357h1v1h-1zM1629 362h1v1h-1zM1629 367h1v1h-1zM1629 371h1v1h-1zM1629 376h1v1h-1zM1629 380h1v1h-1zM1629 385h1v1h-1zM1629 390h1v1h-1zM1629 394h1v1h-1zM1629 399h1v1h-1zM1629 403h1v1h-1zM1629 408h1v1h-1zM1629 413h1v1h-1zM1629 417h1v1h-1zM1629 422h1v1h-1zM1629 426h1v1h-1zM1629 431h1v1h-1zM1629 436h1v1h-1zM1629 440h1v1h-1zM1629 445h1v1h-1zM1629 449h1v1h-1zM1629 454h1v1h-1zM1629 459h1v1h-1zM1629 464h1v1h-1zM1629 468h1v1h-1zM1629 473h1v1h-1zM1629 478h1v1h-1zM1629 483h1v1h-1zM1629 487h1v1h-1zM1629 492h1v1h-1zM1629 496h1v1h-1zM1629 501h1v1h-1zM1629 506h1v1h-1zM1629 510h1v1h-1zM1629 515h1v1h-1zM1629 520h1v1h-1zM1629 526h1v1h-1zM1629 531h1v1h-1zM1629 535h1v1h-1zM1629 540h1v1h-1zM1629 544h1v1h-1zM1629 549h1v1h-1zM1629 554h1v1h-1zM1629 558h1v1h-1zM1629 563h1v1h-1zM1629 567h1v1h-1zM1629 572h1v1h-1zM1629 577h1v1h-1zM1629 582h1v1h-1zM1629 586h1v1h-1zM1629 591h1v1h-1zM1629 596h1v1h-1zM1629 601h1v1h-1zM1629 605h1v1h-1zM1629 610h1v1h-1zM1629 614h1v1h-1zM1629 619h1v1h-1zM1629 624h1v1h-1zM1629 628h1v1h-1zM1629 633h1v1h-1zM1629 637h1v1h-1zM1629 642h1v1h-1zM1629 647h1v1h-1zM1629 651h1v1h-1zM1629 656h1v1h-1zM1629 660h1v1h-1zM1629 665h1v1h-1zM1629 670h1v1h-1zM1629 674h1v1h-1zM1629 679h1v1h-1zM1629 683h1v1h-1zM1629 688h1v1h-1zM1629 693h1v1h-1zM1629 698h1v1h-1zM1629 702h1v1h-1zM1629 707h1v1h-1zM1629 712h1v1h-1zM1629 717h1v1h-1zM1629 721h1v1h-1zM1629 726h1v1h-1zM1629 730h1v1h-1zM1629 735h1v1h-1zM1629 740h1v1h-1zM1629 744h1v1h-1zM1629 749h1v1h-1zM1629 754h1v1h-1zM1629 764h1v1h-1zM1629 769h1v1h-1zM1629 773h1v1h-1zM1629 778h1v1h-1zM1629 782h1v1h-1zM1629 787h1v1h-1zM1629 792h1v1h-1zM1629 796h1v1h-1zM1629 801h1v1h-1zM1629 805h1v1h-1zM1629 810h1v1h-1zM1629 815h1v1h-1zM1629 820h1v1h-1zM1629 824h1v1h-1zM1629 829h1v1h-1zM1629 834h1v1h-1zM1629 839h1v1h-1zM1629 843h1v1h-1zM1629 848h1v1h-1zM1629 852h1v1h-1zM1629 857h1v1h-1zM1629 862h1v1h-1zM1629 866h1v1h-1zM1629 871h1v1h-1zM1629 875h1v1h-1zM1629 880h1v1h-1zM1629 885h1v1h-1zM1629 890h1v1h-1zM1629 894h1v1h-1zM1629 899h1v1h-1zM1629 904h1v1h-1zM1629 909h1v1h-1zM1629 913h1v1h-1zM1629 918h1v1h-1zM1629 922h1v1h-1zM1629 927h1v1h-1zM1629 932h1v1h-1zM1629 936h1v1h-1zM1629 941h1v1h-1zM1629 945h1v1h-1zM1629 950h1v1h-1zM1629 955h1v1h-1zM1629 959h1v1h-1zM1629 964h1v1h-1zM1629 968h1v1h-1zM1629 973h1v1h-1zM1629 978h1v1h-1z"/>
<rect x="3" y="290" width="1748" height="2" fill="#777777"/>
<rect x="3" y="524" width="1748" height="2" fill="#777777"/>
<rect x="3" y="758" width="1748" height="2" fill="#777777"/>
<line x1="3" y1="267.5" x2="1751" y2="267.5" stroke="#c4c4c4" stroke-width="1" stroke-dasharray="5 5"/>
<line x1="3" y1="431.5" x2="1751" y2="431.5" stroke="#c4c4c4" stroke-width="1" stroke-dasharray="5 5"/>
<line x1="3" y1="735.5" x2="1751" y2="735.5" stroke="#c4c4c4" stroke-width="1" stroke-dasharray="5 5"/>
<line x1="3" y1="950.5" x2="1751" y2="950.5" stroke="#c4c4c4" stroke-width="1" stroke-dasharray="5 5"/>
<line x1="55.5" y1="95" x2="55.5" y2="992" stroke="#c4c4c4" stroke-width="1" stroke-dasharray="5 5"/>
<path d="M45 58 H65 L55 67.3 Z" fill="#f5901e"/>
<path d="M45 68 H65 V89 H59.3 L55.3 95.6 L51.5 89 H45 Z" fill="#f5901e"/>
<path d="M47.6 70.2 H62.4 V86.6 H58 L55.3 90.5 L52.6 86.6 H47.6 Z" fill="#000"/>
<rect x="50.6" y="73" width="8.8" height="2.2" fill="#f5901e"/><rect x="54" y="73" width="2.9" height="10.9" fill="#f5901e"/>
<rect x="1713.8" y="73.5" width="37.2" height="16" fill="#000"/><text x="1745.5" y="86.1" font-size="13" fill="#ece42a" text-anchor="end">40 V</text><rect x="1713.8" y="96.5" width="37.2" height="16" fill="#000"/><text x="1745.5" y="109.1" font-size="13" fill="#ece42a" text-anchor="end">35 V</text><rect x="1713.8" y="120.0" width="37.2" height="16" fill="#000"/><text x="1745.5" y="132.6" font-size="13" fill="#ece42a" text-anchor="end">30 V</text><rect x="1713.8" y="143.0" width="37.2" height="16" fill="#000"/><text x="1745.5" y="155.6" font-size="13" fill="#ece42a" text-anchor="end">25 V</text><rect x="1713.8" y="166.3" width="37.2" height="16" fill="#000"/><text x="1745.5" y="178.9" font-size="13" fill="#ece42a" text-anchor="end">20 V</text><rect x="1713.8" y="189.5" width="37.2" height="16" fill="#000"/><text x="1745.5" y="202.1" font-size="13" fill="#ece42a" text-anchor="end">15 V</text><rect x="1713.8" y="212.5" width="37.2" height="16" fill="#000"/><text x="1745.5" y="225.1" font-size="13" fill="#ece42a" text-anchor="end">10 V</text><rect x="1721.0" y="236.0" width="30.0" height="16" fill="#000"/><text x="1745.5" y="248.6" font-size="13" fill="#ece42a" text-anchor="end">5 V</text><rect x="1721.0" y="259.5" width="30.0" height="16" fill="#000"/><text x="1745.5" y="272.1" font-size="13" fill="#ece42a" text-anchor="end">0 V</text>
<rect x="1721.0" y="307.5" width="30.0" height="16" fill="#000"/><text x="1745.5" y="320.1" font-size="13" fill="#8ccd2c" text-anchor="end">1 V</text><rect x="1695.7" y="330.7" width="55.3" height="16" fill="#000"/><text x="1745.5" y="343.3" font-size="13" fill="#8ccd2c" text-anchor="end">800 mV</text><rect x="1695.7" y="354.0" width="55.3" height="16" fill="#000"/><text x="1745.5" y="366.6" font-size="13" fill="#8ccd2c" text-anchor="end">600 mV</text><rect x="1695.7" y="377.5" width="55.3" height="16" fill="#000"/><text x="1745.5" y="390.1" font-size="13" fill="#8ccd2c" text-anchor="end">400 mV</text><rect x="1695.7" y="400.7" width="55.3" height="16" fill="#000"/><text x="1745.5" y="413.3" font-size="13" fill="#8ccd2c" text-anchor="end">200 mV</text><rect x="1721.0" y="423.5" width="30.0" height="16" fill="#000"/><text x="1745.5" y="436.1" font-size="13" fill="#8ccd2c" text-anchor="end">0 V</text><rect x="1691.4" y="446.7" width="59.6" height="16" fill="#000"/><text x="1745.5" y="459.3" font-size="13" fill="#8ccd2c" text-anchor="end">-200 mV</text><rect x="1691.4" y="470.2" width="59.6" height="16" fill="#000"/><text x="1745.5" y="482.8" font-size="13" fill="#8ccd2c" text-anchor="end">-400 mV</text><rect x="1691.4" y="493.5" width="59.6" height="16" fill="#000"/><text x="1745.5" y="506.1" font-size="13" fill="#8ccd2c" text-anchor="end">-600 mV</text>
<rect x="1671.1" y="541.4" width="79.9" height="16" fill="#000"/><text x="1745.5" y="554.0" font-size="13" fill="#e68a22" text-anchor="end">586.935 mT</text><rect x="1671.1" y="564.4" width="79.9" height="16" fill="#000"/><text x="1745.5" y="577.0" font-size="13" fill="#e68a22" text-anchor="end">513.568 mT</text><rect x="1671.1" y="588.0" width="79.9" height="16" fill="#000"/><text x="1745.5" y="600.6" font-size="13" fill="#e68a22" text-anchor="end">440.201 mT</text><rect x="1671.1" y="611.2" width="79.9" height="16" fill="#000"/><text x="1745.5" y="623.8" font-size="13" fill="#e68a22" text-anchor="end">366.834 mT</text><rect x="1671.1" y="634.4" width="79.9" height="16" fill="#000"/><text x="1745.5" y="647.0" font-size="13" fill="#e68a22" text-anchor="end">293.467 mT</text><rect x="1671.1" y="657.6" width="79.9" height="16" fill="#000"/><text x="1745.5" y="670.2" font-size="13" fill="#e68a22" text-anchor="end">220.101 mT</text><rect x="1671.1" y="680.9" width="79.9" height="16" fill="#000"/><text x="1745.5" y="693.5" font-size="13" fill="#e68a22" text-anchor="end">146.734 mT</text><rect x="1678.3" y="704.2" width="72.7" height="16" fill="#000"/><text x="1745.5" y="716.8" font-size="13" fill="#e68a22" text-anchor="end">73.367 mT</text><rect x="1722.0" y="727.5" width="29.0" height="16" fill="#000"/><text x="1745.5" y="740.1" font-size="13" fill="#e68a22" text-anchor="end">0 T</text>
<rect x="1667.5" y="779.6" width="83.5" height="16" fill="#000"/><text x="1745.5" y="792.2" font-size="13" fill="#8a3cb4" text-anchor="end">1.536606 kA</text><rect x="1667.5" y="802.8" width="83.5" height="16" fill="#000"/><text x="1745.5" y="815.4" font-size="13" fill="#8a3cb4" text-anchor="end">1.317091 kA</text><rect x="1667.5" y="826.0" width="83.5" height="16" fill="#000"/><text x="1745.5" y="838.6" font-size="13" fill="#8a3cb4" text-anchor="end">1.097576 kA</text><rect x="1681.9" y="849.3" width="69.1" height="16" fill="#000"/><text x="1745.5" y="861.9" font-size="13" fill="#8a3cb4" text-anchor="end">878.061 A</text><rect x="1681.9" y="872.5" width="69.1" height="16" fill="#000"/><text x="1745.5" y="885.1" font-size="13" fill="#8a3cb4" text-anchor="end">658.546 A</text><rect x="1681.9" y="895.7" width="69.1" height="16" fill="#000"/><text x="1745.5" y="908.3" font-size="13" fill="#8a3cb4" text-anchor="end">439.030 A</text><rect x="1681.9" y="918.9" width="69.1" height="16" fill="#000"/><text x="1745.5" y="931.5" font-size="13" fill="#8a3cb4" text-anchor="end">219.515 A</text><rect x="1721.7" y="942.4" width="29.3" height="16" fill="#000"/><text x="1745.5" y="955.0" font-size="13" fill="#8a3cb4" text-anchor="end">0 A</text><rect x="1677.6" y="965.4" width="73.4" height="16" fill="#000"/><text x="1745.5" y="978.0" font-size="13" fill="#8a3cb4" text-anchor="end">-219.515 A</text>
<text x="55.5" y="987.0" font-size="13" fill="#b8b8b8" text-anchor="middle">0 s</text>
<text x="230.4" y="987.0" font-size="13" fill="#b8b8b8" text-anchor="middle">5 ms</text>
<text x="405.2" y="987.0" font-size="13" fill="#b8b8b8" text-anchor="middle">10 ms</text>
<text x="580.1" y="987.0" font-size="13" fill="#b8b8b8" text-anchor="middle">15 ms</text>
<text x="755.0" y="987.0" font-size="13" fill="#b8b8b8" text-anchor="middle">20 ms</text>
<text x="929.9" y="987.0" font-size="13" fill="#b8b8b8" text-anchor="middle">25 ms</text>
<text x="1104.7" y="987.0" font-size="13" fill="#b8b8b8" text-anchor="middle">30 ms</text>
<text x="1279.6" y="987.0" font-size="13" fill="#b8b8b8" text-anchor="middle">35 ms</text>
<text x="1454.5" y="987.0" font-size="13" fill="#b8b8b8" text-anchor="middle">40 ms</text>
<text x="1629.4" y="987.0" font-size="13" fill="#b8b8b8" text-anchor="middle">45 ms</text>
<g clip-path="none" fill="none" stroke-width="1.2" stroke-linejoin="round">
<path d="M3.0 265.5 L55.0 265.5 L55.6 259.5 L56.2 270.0 L57.0 265.5 L60.0 266.5 L64.0 265.5 L76.7 265.5 L76.7 257.7 L82.2 256.0 L84.2 252.7 L86.2 249.8 L88.2 247.6 L90.2 245.6 L92.2 243.8 L94.2 242.2 L96.2 240.9 L98.2 239.8 L100.2 238.9 L102.2 238.0 L104.2 237.2 L106.2 236.4 L108.2 235.3 L110.2 234.0 L112.2 232.3 L114.2 230.5 L116.2 228.9 L118.2 227.7 L120.2 226.6 L122.2 225.6 L124.2 224.7 L126.2 223.8 L128.2 223.0 L130.2 222.3 L132.2 221.6 L134.2 221.0 L136.2 220.4 L138.2 219.8 L140.2 219.3 L142.2 218.9 L144.2 218.4 L146.2 218.0 L148.2 217.6 L150.2 217.3 L152.2 217.0 L154.2 216.7 L156.2 216.6 L158.2 216.4 L160.2 216.3 L162.2 216.3 L163.4 216.2 L169.7 227.2 L180.6 230.3 L197.8 237.3 L215.0 237.3 L222.0 236.0 L227.5 239.7 L229.0 230.0 L232.0 239.7 L234.5 220.0 L236.0 232.7 L238.4 181.9 L242.3 180.3 L244.3 181.9 L246.3 183.4 L248.3 184.9 L250.3 186.5 L252.3 188.0 L254.3 189.5 L256.3 191.0 L258.3 192.6 L260.3 194.2 L262.3 195.7 L264.3 197.1 L266.3 198.2 L268.3 199.3 L270.3 200.3 L272.3 201.2 L274.3 202.1 L276.3 203.0 L278.3 203.8 L280.3 204.5 L282.3 205.3 L284.3 206.0 L286.3 206.7 L288.3 207.4 L290.3 208.0 L292.3 208.7 L294.3 209.3 L296.3 209.9 L298.3 210.4 L300.3 211.0 L302.3 211.5 L304.3 212.0 L306.3 212.5 L308.3 212.9 L310.3 213.4 L312.3 213.9 L314.3 214.3 L316.3 214.8 L318.3 215.2 L320.3 215.6 L322.3 216.0 L324.3 216.3 L326.3 216.6 L328.3 216.9 L330.3 217.1 L332.3 217.3 L334.3 217.5 L336.3 217.7 L338.3 217.9 L340.3 218.1 L342.3 218.2 L344.3 218.4 L346.3 218.5 L348.3 218.6 L350.3 218.7 L352.3 218.8 L354.3 218.9 L356.3 219.0 L358.3 219.1 L360.3 219.2 L362.3 219.3 L364.3 219.4 L366.3 219.4 L368.3 219.5 L370.3 219.5 L372.3 219.6 L373.8 219.6 L374.2 224.4 L379.4 224.4 L379.4 222.3 L406.0 222.3 L410.2 217.1 L417.5 220.2 L419.5 220.6 L421.5 220.9 L423.5 221.3 L425.5 221.6 L427.5 222.0 L429.5 222.3 L431.5 222.6 L433.5 222.9 L435.5 223.1 L437.5 223.4 L439.5 223.6 L441.5 223.7 L443.5 223.8 L445.5 223.9 L447.5 224.0 L449.5 224.1 L451.5 224.2 L453.5 224.2 L455.5 224.3 L457.5 224.4 L459.5 224.5 L461.5 224.5 L463.5 224.6 L465.5 224.7 L467.5 224.7 L469.5 224.8 L471.5 224.9 L473.5 224.9 L475.5 225.0 L477.5 225.0 L479.5 225.1 L481.5 225.1 L483.5 225.1 L485.5 225.2 L487.5 225.2 L489.5 225.2 L491.5 225.3 L493.5 225.3 L495.5 225.3 L497.5 225.3 L499.5 225.4 L501.5 225.4 L503.5 225.4 L505.5 225.4 L507.5 225.4 L509.0 225.4 L514.4 223.8 L516.4 224.0 L518.4 224.3 L520.4 224.5 L522.4 224.8 L524.4 225.0 L526.4 225.2 L528.4 225.5 L530.4 225.7 L532.4 225.9 L534.4 226.1 L536.4 226.3 L538.4 226.5 L540.4 226.7 L542.4 226.9 L544.4 227.0 L546.4 227.2 L548.4 227.3 L550.4 227.5 L552.4 227.6 L554.4 227.7 L556.4 227.8 L558.4 228.0 L560.4 228.1 L562.4 228.2 L564.4 228.4 L566.4 228.5 L568.4 228.6 L570.4 228.8 L572.4 228.9 L574.4 229.1 L576.4 229.3 L578.4 229.4 L580.4 229.6 L582.4 229.8 L584.4 230.1 L586.4 230.3 L588.4 230.5 L590.4 230.8 L592.4 231.0 L594.4 231.3 L596.4 231.5 L598.4 231.8 L600.4 232.1 L602.4 232.4 L604.4 232.7 L606.4 233.0 L608.4 233.3 L610.4 233.6 L612.4 234.0 L614.4 234.3 L616.4 234.6 L617.5 234.8 L619.6 245.2 L630.0 247.9 L640.4 252.0 L647.7 252.0 L647.7 249.8 L660.2 251.5 L660.2 248.3 L684.2 247.3 L686.2 247.3 L688.2 247.3 L690.2 247.3 L692.2 247.3 L694.2 247.4 L696.2 247.4 L698.2 247.4 L700.2 247.4 L702.2 247.5 L704.2 247.5 L706.2 247.6 L708.2 247.6 L710.2 247.6 L712.2 247.7 L714.2 247.7 L716.2 247.8 L718.2 247.8 L720.2 247.9 L722.2 248.0 L724.2 248.1 L726.2 248.2 L728.2 248.4 L730.2 248.6 L732.2 248.8 L734.2 249.0 L736.2 249.2 L738.2 249.4 L740.2 249.6 L742.2 249.9 L744.2 250.1 L746.2 250.3 L748.2 250.5 L750.2 250.7 L752.2 250.9 L754.2 251.0 L756.2 251.2 L758.2 251.3 L760.2 251.4 L762.2 251.6 L764.2 251.7 L766.2 251.8 L768.2 252.0 L770.2 252.1 L772.2 252.2 L774.2 252.4 L776.2 252.5 L778.2 252.6 L780.2 252.7 L782.2 252.8 L784.2 252.8 L786.2 252.9 L788.2 252.9 L790.2 253.0 L792.2 253.0 L794.2 252.9 L796.2 252.5 L798.2 251.8 L800.2 251.1 L802.2 250.5 L804.2 250.3 L806.2 250.3 L808.2 250.4 L810.2 250.5 L812.2 250.7 L814.2 250.8 L816.2 251.0 L818.2 251.2 L820.2 251.3 L822.2 251.6 L824.2 251.8 L826.2 252.1 L828.2 252.4 L830.2 252.7 L832.2 253.0 L834.2 253.3 L836.2 253.6 L838.2 253.9 L840.2 254.2 L842.2 254.5 L844.2 254.8 L846.2 255.1 L848.2 255.3 L850.2 255.5 L852.2 255.6 L854.2 255.7 L856.2 255.8 L858.2 255.8 L860.2 255.9 L862.2 255.9 L864.2 256.0 L866.2 256.0 L868.2 256.1 L870.2 256.1 L872.2 256.1 L874.2 256.2 L876.2 256.2 L878.2 256.3 L880.2 256.3 L882.2 256.4 L884.2 256.4 L886.2 256.4 L888.2 256.5 L890.2 256.5 L892.2 256.5 L894.2 256.6 L896.2 256.6 L898.2 256.6 L900.2 256.7 L902.2 256.7 L904.2 256.7 L906.2 256.7 L908.2 256.8 L910.2 256.8 L912.2 256.8 L914.2 256.8 L916.2 256.9 L918.2 256.9 L920.2 256.9 L922.2 256.9 L924.2 256.9 L926.2 256.9 L928.2 257.0 L930.2 257.0 L932.2 257.0 L934.2 257.0 L936.2 257.0 L938.2 257.0 L940.2 257.0 L942.2 257.1 L944.2 257.1 L946.2 257.1 L948.2 257.1 L950.2 257.1 L952.2 257.1 L954.2 257.1 L956.2 257.1 L958.2 257.1 L960.2 257.1 L962.2 257.1 L963.8 257.1 L973.2 253.3 L990.8 253.9 L1018.0 257.9 L1104.6 259.3 L1108.7 256.6 L1120.9 256.6 L1123.6 259.3 L1138.5 259.3 L1139.8 256.0 L1234.6 258.5 L1236.0 261.2 L1241.0 260.4 L1312.8 260.4 L1323.8 264.0 L1345.9 262.6 L1354.2 264.0 L1362.5 261.2 L1489.5 261.7 L1492.2 267.3 L1517.0 265.9 L1519.8 262.6 L1526.7 259.0 L1564.0 261.7 L1577.8 261.7 L1586.0 257.6 L1594.3 258.2 L1616.4 261.7 L1630.2 261.7 L1634.4 260.4 L1638.5 261.7 L1738.0 262.6 L1740.6 270.0 L1751.0 269.5" stroke="#f4f000"/>
<path d="M3.0 429.4 L166.6 429.4 L168.6 427.8 L170.6 426.2 L172.6 424.6 L174.6 423.0 L176.6 421.5 L178.6 420.0 L180.6 418.5 L182.6 416.9 L184.6 415.4 L186.6 413.8 L188.6 412.3 L190.6 411.0 L192.6 409.8 L194.6 408.8 L196.6 407.9 L198.6 407.0 L200.6 406.2 L202.6 405.6 L204.6 405.2 L206.6 405.2 L208.6 405.3 L210.6 405.5 L212.6 405.7 L214.6 405.9 L216.6 406.2 L218.6 406.6 L220.6 407.0 L222.6 407.5 L224.6 408.0 L226.6 408.5 L228.6 409.0 L230.6 409.5 L232.6 410.0 L234.6 410.6 L236.6 411.2 L238.6 412.0 L240.6 413.0 L242.6 414.2 L244.6 415.6 L246.6 417.1 L248.6 418.4 L250.6 419.6 L252.6 420.5 L254.6 421.3 L256.6 421.9 L258.6 422.5 L260.6 423.0 L262.6 423.5 L264.6 424.0 L266.6 424.4 L268.6 424.8 L270.6 425.2 L272.6 425.5 L274.6 425.8 L276.6 426.1 L278.6 426.4 L280.6 426.7 L282.6 426.9 L284.6 427.2 L286.6 427.4 L288.6 427.6 L290.6 427.9 L292.6 428.1 L294.6 428.3 L296.6 428.5 L298.6 428.6 L300.6 428.8 L302.6 429.0 L304.6 429.1 L306.6 429.3 L308.6 429.4 L308.8 429.4 L1751.0 429.4" stroke="#8fcf2e"/>
<path d="M3.0 735.4 L55.0 735.4 L59.0 733.5 L63.0 731.7 L67.0 730.1 L71.0 728.6 L75.0 727.1 L79.0 725.6 L83.0 724.2 L87.0 722.8 L91.0 721.5 L95.0 720.2 L99.0 718.9 L103.0 717.6 L107.0 716.4 L111.0 715.2 L115.0 713.9 L119.0 712.7 L123.0 711.5 L127.0 710.4 L131.0 709.2 L135.0 708.0 L139.0 706.8 L143.0 705.6 L147.0 704.4 L151.0 703.2 L155.0 702.0 L159.0 700.8 L163.0 699.5 L167.0 698.3 L171.0 697.0 L175.0 695.8 L179.0 694.5 L183.0 693.3 L187.0 692.0 L191.0 690.8 L195.0 689.6 L199.0 688.4 L203.0 687.2 L207.0 686.0 L211.0 684.9 L215.0 683.7 L219.0 682.6 L223.0 681.5 L227.0 680.3 L231.0 679.2 L235.0 678.1 L239.0 677.0 L243.0 675.9 L247.0 674.8 L251.0 673.7 L255.0 672.6 L259.0 671.5 L263.0 670.3 L267.0 669.2 L271.0 668.1 L275.0 667.0 L279.0 665.9 L283.0 664.8 L287.0 663.7 L291.0 662.6 L295.0 661.5 L299.0 660.4 L303.0 659.3 L307.0 658.2 L311.0 657.1 L315.0 656.1 L319.0 655.0 L323.0 653.9 L327.0 652.8 L331.0 651.8 L335.0 650.7 L339.0 649.7 L343.0 648.6 L347.0 647.6 L351.0 646.5 L355.0 645.5 L359.0 644.5 L363.0 643.5 L367.0 642.4 L371.0 641.4 L375.0 640.4 L379.0 639.4 L383.0 638.5 L387.0 637.5 L391.0 636.5 L395.0 635.6 L399.0 634.6 L403.0 633.7 L407.0 632.7 L411.0 631.8 L415.0 630.9 L419.0 630.1 L423.0 629.2 L427.0 628.4 L431.0 627.5 L435.0 626.7 L439.0 625.8 L443.0 625.0 L447.0 624.1 L451.0 623.2 L455.0 622.4 L459.0 621.5 L463.0 620.6 L467.0 619.8 L471.0 618.9 L475.0 618.0 L479.0 617.2 L483.0 616.3 L487.0 615.5 L491.0 614.6 L495.0 613.7 L499.0 612.9 L503.0 612.0 L507.0 611.2 L511.0 610.3 L515.0 609.5 L519.0 608.6 L523.0 607.8 L527.0 607.0 L531.0 606.2 L535.0 605.3 L539.0 604.5 L543.0 603.7 L547.0 602.9 L551.0 602.1 L555.0 601.4 L559.0 600.6 L563.0 599.8 L567.0 599.1 L571.0 598.3 L575.0 597.6 L579.0 596.9 L583.0 596.3 L587.0 595.6 L591.0 594.9 L595.0 594.3 L599.0 593.6 L603.0 593.0 L607.0 592.3 L611.0 591.7 L615.0 591.0 L619.0 590.4 L623.0 589.7 L627.0 589.1 L631.0 588.5 L635.0 587.8 L639.0 587.2 L643.0 586.6 L647.0 586.0 L651.0 585.4 L655.0 584.7 L659.0 584.1 L663.0 583.5 L667.0 582.9 L671.0 582.3 L675.0 581.8 L679.0 581.2 L683.0 580.6 L687.0 580.0 L691.0 579.5 L695.0 578.9 L699.0 578.4 L703.0 577.8 L707.0 577.3 L711.0 576.7 L715.0 576.2 L719.0 575.7 L723.0 575.2 L727.0 574.7 L731.0 574.1 L735.0 573.7 L739.0 573.2 L743.0 572.7 L747.0 572.2 L751.0 571.8 L755.0 571.3 L759.0 570.8 L763.0 570.4 L767.0 570.0 L771.0 569.5 L775.0 569.1 L779.0 568.6 L783.0 568.2 L787.0 567.8 L791.0 567.4 L795.0 566.9 L799.0 566.5 L803.0 566.1 L807.0 565.7 L811.0 565.3 L815.0 564.9 L819.0 564.5 L823.0 564.1 L827.0 563.7 L831.0 563.3 L835.0 563.0 L839.0 562.6 L843.0 562.2 L847.0 561.8 L851.0 561.5 L855.0 561.1 L859.0 560.7 L863.0 560.4 L867.0 560.0 L871.0 559.7 L875.0 559.4 L879.0 559.0 L883.0 558.7 L887.0 558.4 L891.0 558.0 L895.0 557.7 L899.0 557.4 L903.0 557.1 L907.0 556.8 L911.0 556.5 L915.0 556.2 L919.0 555.9 L923.0 555.6 L927.0 555.4 L931.0 555.1 L935.0 554.8 L939.0 554.6 L943.0 554.4 L947.0 554.1 L951.0 553.9 L955.0 553.7 L959.0 553.5 L963.0 553.2 L967.0 553.0 L971.0 552.8 L975.0 552.6 L979.0 552.3 L983.0 552.1 L987.0 551.9 L991.0 551.7 L995.0 551.5 L999.0 551.3 L1003.0 551.1 L1007.0 551.0 L1011.0 550.8 L1015.0 550.7 L1019.0 550.5 L1023.0 550.4 L1027.0 550.3 L1031.0 550.2 L1035.0 550.1 L1039.0 550.0 L1043.0 549.9 L1047.0 549.8 L1051.0 549.7 L1055.0 549.6 L1059.0 549.5 L1063.0 549.5 L1067.0 549.4 L1071.0 549.4 L1075.0 549.4 L1079.0 549.4 L1083.0 549.4 L1087.0 549.4 L1091.0 549.4 L1095.0 549.4 L1099.0 549.4 L1103.0 549.4 L1107.0 549.4 L1111.0 549.4 L1115.0 549.4 L1119.0 549.4 L1123.0 549.4 L1127.0 549.4 L1131.0 549.4 L1135.0 549.4 L1139.0 549.4 L1143.0 549.4 L1147.0 549.4 L1151.0 549.4 L1155.0 549.4 L1159.0 549.4 L1163.0 549.4 L1167.0 549.4 L1171.0 549.4 L1175.0 549.4 L1179.0 549.4 L1183.0 549.4 L1187.0 549.5 L1191.0 549.6 L1195.0 549.8 L1199.0 550.0 L1203.0 550.2 L1207.0 550.4 L1211.0 550.6 L1215.0 550.8 L1219.0 551.0 L1223.0 551.2 L1227.0 551.3 L1231.0 551.5 L1235.0 551.6 L1239.0 551.8 L1243.0 551.9 L1247.0 552.1 L1251.0 552.2 L1255.0 552.3 L1259.0 552.5 L1263.0 552.6 L1267.0 552.8 L1271.0 552.9 L1275.0 553.1 L1279.0 553.3 L1283.0 553.4 L1287.0 553.6 L1291.0 553.8 L1295.0 554.1 L1299.0 554.3 L1303.0 554.5 L1307.0 554.7 L1311.0 555.0 L1315.0 555.2 L1319.0 555.5 L1323.0 555.7 L1327.0 555.9 L1331.0 556.2 L1335.0 556.4 L1339.0 556.7 L1343.0 556.9 L1347.0 557.2 L1351.0 557.4 L1355.0 557.7 L1359.0 557.9 L1363.0 558.1 L1367.0 558.4 L1371.0 558.6 L1375.0 558.9 L1379.0 559.1 L1383.0 559.4 L1387.0 559.6 L1391.0 559.9 L1395.0 560.2 L1399.0 560.4 L1403.0 560.7 L1407.0 560.9 L1411.0 561.2 L1415.0 561.5 L1419.0 561.8 L1423.0 562.0 L1427.0 562.3 L1431.0 562.6 L1435.0 562.9 L1439.0 563.2 L1443.0 563.5 L1447.0 563.8 L1451.0 564.1 L1455.0 564.4 L1459.0 564.7 L1463.0 565.1 L1467.0 565.4 L1471.0 565.7 L1475.0 566.1 L1479.0 566.4 L1483.0 566.8 L1487.0 567.1 L1491.0 567.5 L1495.0 567.9 L1499.0 568.2 L1503.0 568.6 L1507.0 569.0 L1511.0 569.4 L1515.0 569.8 L1519.0 570.2 L1523.0 570.6 L1527.0 571.0 L1531.0 571.4 L1535.0 571.8 L1539.0 572.2 L1543.0 572.6 L1547.0 573.0 L1551.0 573.4 L1555.0 573.9 L1559.0 574.3 L1563.0 574.7 L1567.0 575.2 L1571.0 575.6 L1575.0 576.0 L1579.0 576.5 L1583.0 576.9 L1587.0 577.3 L1591.0 577.8 L1595.0 578.2 L1599.0 578.7 L1603.0 579.1 L1607.0 579.6 L1611.0 580.0 L1615.0 580.4 L1619.0 580.9 L1623.0 581.3 L1627.0 581.8 L1631.0 582.2 L1635.0 582.7 L1639.0 583.1 L1643.0 583.6 L1647.0 584.1 L1651.0 584.5 L1655.0 585.0 L1659.0 585.5 L1663.0 585.9 L1667.0 586.4 L1671.0 586.9 L1675.0 587.4 L1679.0 587.9 L1683.0 588.4 L1687.0 588.9 L1691.0 589.4 L1695.0 589.9 L1699.0 590.4 L1703.0 590.9 L1707.0 591.4 L1711.0 591.9 L1715.0 592.4 L1719.0 592.9 L1723.0 593.4 L1727.0 593.9 L1731.0 594.5 L1735.0 595.0 L1739.0 595.5 L1743.0 596.0 L1747.0 596.6 L1751.0 597.1" stroke="#f28c1e"/>
<path d="M3.0 951.4 L55.0 951.4 L55.8 940.0 L56.2 962.5 L57.0 951.5 L62.0 951.9 L69.0 951.0 L76.5 952.0 L77.0 955.4 L77.3 968.3 L77.6 956.0 L79.7 958.0 L83.3 961.6 L88.6 959.9 L97.4 957.6 L109.8 955.4 L113.4 958.0 L117.8 956.3 L132.9 954.5 L159.4 952.8 L163.0 950.1 L165.9 933.0 L169.6 916.3 L173.3 910.7 L182.6 892.2 L195.6 858.9 L201.1 844.0 L208.5 829.3 L211.0 822.0 L213.0 826.0 L214.0 820.0 L216.0 815.0 L217.5 819.0 L219.6 807.0 L222.0 800.0 L223.5 805.0 L227.0 792.2 L228.9 810.7 L230.7 792.2 L232.6 783.0 L234.4 827.4 L236.3 797.8 L237.8 881.1 L239.0 914.4 L243.7 940.4 L254.8 944.0 L269.6 945.9 L300.0 949.6 L327.5 951.9 L373.3 954.4 L374.4 943.5 L378.5 944.2 L379.6 953.3 L381.7 947.7 L404.6 949.8 L406.7 956.0 L409.8 962.9 L415.0 960.2 L416.0 959.2 L440.0 959.2 L441.0 956.0 L512.9 959.2 L515.0 964.4 L519.2 962.3 L540.0 962.9 L598.3 963.8 L602.5 962.3 L618.1 962.9 L619.6 942.5 L624.4 942.9 L625.4 949.8 L627.5 944.8 L644.2 949.8 L647.3 959.2 L659.8 957.1 L661.9 965.0 L690.0 963.8 L756.0 965.9 L792.5 966.8 L798.0 968.8 L809.4 968.8 L823.4 966.8 L927.5 964.5 L966.8 964.5 L972.5 967.9 L989.3 965.9 L1031.5 961.7 L1104.6 960.3 L1107.4 961.2 L1108.8 965.5 L1110.5 962.0 L1114.5 962.6 L1115.9 966.5 L1117.0 962.0 L1122.5 961.8 L1123.0 957.8 L1138.4 959.2 L1139.8 965.5 L1144.0 963.5 L1210.0 963.0 L1234.4 962.4 L1235.8 955.2 L1244.4 958.7 L1253.0 959.5 L1316.0 958.1 L1324.6 955.8 L1341.8 956.4 L1350.4 957.2 L1353.8 953.8 L1361.9 957.2 L1382.0 957.8 L1453.6 955.8 L1489.4 954.4 L1492.2 942.3 L1496.5 943.5 L1497.1 947.2 L1519.5 947.2 L1520.9 957.2 L1526.6 959.3 L1530.9 955.8 L1565.3 954.4 L1565.9 950.9 L1579.6 952.1 L1585.4 955.2 L1611.1 950.1 L1628.3 948.7 L1631.2 952.4 L1636.9 950.1 L1734.4 948.1 L1737.2 930.0 L1740.0 928.6 L1745.8 932.9 L1751.0 932.9" stroke="#7a2ca0"/>
</g>
<path d="M1709.5 64.8 H1741 Q1744.6 64.8 1744.6 68.5 V99 Z" fill="#565656"/>
<circle cx="1737" cy="71.7" r="4.2" fill="none" stroke="#a8a8a8" stroke-width="1.8"/>
<line x1="1733.8" y1="75" x2="1728.5" y2="80" stroke="#a8a8a8" stroke-width="2.2" stroke-linecap="round"/>
<path d="M10.3 162.2 H77.5 L82.6 174.5 L77.5 186.8 H10.3 Q7.3 186.8 7.3 183.8 V165.2 Q7.3 162.2 10.3 162.2 Z" fill="#221f08" stroke="#ece42a" stroke-width="2"/><line x1="33" y1="162.2" x2="33" y2="186.8" stroke="#ece42a" stroke-width="2"/><text x="10.6" y="179.0" font-size="13" fill="#e0dc3a" textLength="17.2" lengthAdjust="spacingAndGlyphs">C 1</text><text x="45.0" y="179.0" font-size="13" fill="#e0dc3a" textLength="25.3" lengthAdjust="spacingAndGlyphs">20 V</text>
<text x="102.0" y="178.6" font-size="18" fill="#ece42a" textLength="96.8" lengthAdjust="spacingAndGlyphs">U_loop,coil</text>
<path d="M10.5 396.5 H77 L82.5 408.5 L77 420.5 H10.5 Q7.5 420.5 7.5 417.5 V399.5 Q7.5 396.5 10.5 396.5 Z" fill="#141c08" stroke="#8ccd2c" stroke-width="2"/><line x1="33.2" y1="396.5" x2="33.2" y2="420.5" stroke="#8ccd2c" stroke-width="2"/><text x="10.7" y="413.0" font-size="13" fill="#9ad040" textLength="17.4" lengthAdjust="spacingAndGlyphs">C 4</text><text x="35.7" y="413.0" font-size="13" fill="#9ad040" textLength="42.5" lengthAdjust="spacingAndGlyphs">200 mV</text>
<text x="101.9" y="413.1" font-size="18" fill="#8ccd2c" textLength="85.1" lengthAdjust="spacingAndGlyphs">U_Photod</text>
<path d="M10 723 H29.7 L41.5 735 L29.7 747 H10 Q7 747 7 744 V726 Q7 723 10 723 Z" fill="#1e1408" stroke="#f28c1e" stroke-width="1.6"/>
<text x="13.5" y="738.3" font-size="11.5" fill="#e89030" textLength="19.8" lengthAdjust="spacingAndGlyphs">M 1</text>
<text x="54.7" y="741.7" font-size="25" fill="#f28c1e" textLength="38.0" lengthAdjust="spacingAndGlyphs">B_t</text>
<line x1="41.5" y1="735.5" x2="55" y2="735.5" stroke="#f28c1e" stroke-width="1.4"/>
<path d="M10 937.3 H30 L42 950.2 L30 963 H10 Q6.2 963 6.2 959.5 V941 Q6.2 937.3 10 937.3 Z" fill="#6c2c96"/>
<text x="13.5" y="954.8" font-size="13" fill="#ffffff" textLength="20.5" lengthAdjust="spacingAndGlyphs">M 2</text>
<line x1="42" y1="951.4" x2="55" y2="951.4" stroke="#7a2ca0" stroke-width="1.4"/>
<text x="56.0" y="956.0" font-size="16" fill="#7a2ca0" textLength="22.0" lengthAdjust="spacingAndGlyphs">I_p</text>
<path d="M1920 29.5 H1769.5 V995.5 H1920" fill="none" stroke="#5a5a5a" stroke-width="1"/>
<text x="1803.0" y="43.8" font-size="16" fill="#e8e8e8" textLength="83.0" lengthAdjust="spacingAndGlyphs" font-weight="bold">Add New...</text>
<rect x="1778.5" y="54.5" width="62" height="35" rx="6" fill="url(#btn)" stroke="#6b6158" stroke-width="1"/><text x="1809.5" y="77.4" font-size="15" fill="#f4f4f4" text-anchor="middle" textLength="50.5" lengthAdjust="spacingAndGlyphs">Cursors</text>
<rect x="1850.5" y="54.5" width="62" height="35" rx="6" fill="url(#btn)" stroke="#6b6158" stroke-width="1"/><text x="1881.5" y="77.4" font-size="15" fill="#f4f4f4" text-anchor="middle" textLength="49.0" lengthAdjust="spacingAndGlyphs">Callout</text>
<rect x="1778.5" y="100.5" width="62" height="35" rx="6" fill="url(#btn)" stroke="#6b6158" stroke-width="1"/><text x="1809.5" y="123.4" font-size="15" fill="#f4f4f4" text-anchor="middle" textLength="59.0" lengthAdjust="spacingAndGlyphs">Measure</text>
<rect x="1850.5" y="100.5" width="62" height="35" rx="6" fill="url(#btn)" stroke="#6b6158" stroke-width="1"/><text x="1881.5" y="123.4" font-size="15" fill="#f4f4f4" text-anchor="middle" textLength="46.0" lengthAdjust="spacingAndGlyphs">Search</text>
<rect x="1778.5" y="146.5" width="62" height="35.5" rx="6" fill="url(#btn)" stroke="#6b6158" stroke-width="1"/><text x="1809.5" y="161.7" font-size="15" fill="#f4f4f4" text-anchor="middle" textLength="48.0" lengthAdjust="spacingAndGlyphs">Results</text><text x="1809.5" y="177.7" font-size="15" fill="#f4f4f4" text-anchor="middle" textLength="36.0" lengthAdjust="spacingAndGlyphs">Table</text>
<rect x="1850.5" y="146.5" width="62" height="35.5" rx="6" fill="url(#btn)" stroke="#6b6158" stroke-width="1"/><text x="1881.5" y="169.7" font-size="15" fill="#f4f4f4" text-anchor="middle" textLength="28.0" lengthAdjust="spacingAndGlyphs">Plot</text>
<rect x="1773" y="189" width="144" height="1" fill="#5b534c"/>
<rect x="1778.5" y="196.5" width="62" height="35.5" rx="6" fill="url(#btn)" stroke="#6b6158" stroke-width="1"/>
<rect x="1850.5" y="196.5" width="62" height="35.5" rx="6" fill="url(#btn)" stroke="#6b6158" stroke-width="1"/><text x="1881.5" y="219.7" font-size="15" fill="#f4f4f4" text-anchor="middle" textLength="50.0" lengthAdjust="spacingAndGlyphs">More...</text>
<rect x="1773" y="241" width="144" height="1" fill="#5b534c"/>
<rect x="1797.8" y="202.5" width="22.5" height="20" fill="none" stroke="#b8b8b8" stroke-width="2" stroke-dasharray="3 2.2"/>
<circle cx="1811" cy="210.5" r="4.6" fill="none" stroke="#c8c8c8" stroke-width="1.8"/>
<line x1="1807.6" y1="214" x2="1803" y2="218" stroke="#c8c8c8" stroke-width="2.4" stroke-linecap="round"/>
<path d="M1815 216 L1815 226 L1817.5 223.5 L1819.5 227 L1821 226 L1819 222.5 L1822.5 222 Z" fill="#c8c8c8"/>
<circle cx="1762" cy="503.6" r="2.1" fill="#c8c8c8"/>
<circle cx="1762" cy="512.2" r="2.1" fill="#c8c8c8"/>
<circle cx="1762" cy="520.8" r="2.1" fill="#c8c8c8"/>
<path d="M7 1003 H89 Q93 1003 93 1007 V1075 Q93 1079 89 1079 H7 Q3 1079 3 1075 V1007 Q3 1003 7 1003 Z" fill="#cdcdcd"/><path d="M7 1003 H89 Q93 1003 93 1007 V1021.5 H3 V1007 Q3 1003 7 1003 Z" fill="#4b4520"/><rect x="3" y="1021.5" width="90" height="1.5" fill="#7a7a7a"/><text x="8.8" y="1017.0" font-size="16" fill="#f2ee30" textLength="27.7" lengthAdjust="spacingAndGlyphs" stroke="#f2ee30" stroke-width="0.35">Ch 1</text><text x="8.8" y="1036.8" font-size="15" fill="#111111" textLength="43.2" lengthAdjust="spacingAndGlyphs">5 V/div</text><text x="8.8" y="1055.7" font-size="15" fill="#111111" textLength="35.0" lengthAdjust="spacingAndGlyphs">1 MΩ</text><text x="8.8" y="1074.6" font-size="15" fill="#111111" textLength="52.0" lengthAdjust="spacingAndGlyphs">200 kHz</text><text x="74.5" y="1069.5" font-size="9" fill="#111" font-weight="bold">B</text><text x="79.5" y="1072.5" font-size="9" fill="#111" font-weight="bold">w</text>
<path d="M102 1003 H183.5 Q187.5 1003 187.5 1007 V1075 Q187.5 1079 183.5 1079 H102 Q98 1079 98 1075 V1007 Q98 1003 102 1003 Z" fill="#878787"/><path d="M102 1003 H183.5 Q187.5 1003 187.5 1007 V1021.5 H98 V1007 Q98 1003 102 1003 Z" fill="#238381"/><rect x="98" y="1021.5" width="89.5" height="1.5" fill="#7a7a7a"/><text x="103.8" y="1017.0" font-size="16" fill="#101a1a" textLength="29.0" lengthAdjust="spacingAndGlyphs" stroke="#101a1a" stroke-width="0.35">Ch 2</text><text x="103.8" y="1036.8" font-size="15" fill="#222222" textLength="73.0" lengthAdjust="spacingAndGlyphs">250 mV/div</text><text x="103.8" y="1055.7" font-size="15" fill="#222222" textLength="35.0" lengthAdjust="spacingAndGlyphs">1 MΩ</text><text x="103.8" y="1074.6" font-size="15" fill="#222222" textLength="52.0" lengthAdjust="spacingAndGlyphs">200 kHz</text><text x="169.0" y="1069.5" font-size="9" fill="#111" font-weight="bold">B</text><text x="174.0" y="1072.5" font-size="9" fill="#111" font-weight="bold">w</text>
<path d="M197 1003 H279 Q283 1003 283 1007 V1075 Q283 1079 279 1079 H197 Q193 1079 193 1075 V1007 Q193 1003 197 1003 Z" fill="#878787"/><path d="M197 1003 H279 Q283 1003 283 1007 V1021.5 H193 V1007 Q193 1003 197 1003 Z" fill="#8d3949"/><rect x="193" y="1021.5" width="90" height="1.5" fill="#7a7a7a"/><text x="198.8" y="1017.0" font-size="16" fill="#c8a3aa" textLength="29.0" lengthAdjust="spacingAndGlyphs" stroke="#c8a3aa" stroke-width="0.35">Ch 3</text><text x="198.8" y="1036.8" font-size="15" fill="#222222" textLength="73.0" lengthAdjust="spacingAndGlyphs">450 mV/div</text><text x="198.8" y="1055.7" font-size="15" fill="#222222" textLength="35.0" lengthAdjust="spacingAndGlyphs">1 MΩ</text><text x="198.8" y="1074.6" font-size="15" fill="#222222" textLength="52.0" lengthAdjust="spacingAndGlyphs">200 kHz</text><text x="264.5" y="1069.5" font-size="9" fill="#111" font-weight="bold">B</text><text x="269.5" y="1072.5" font-size="9" fill="#111" font-weight="bold">w</text>
<path d="M292 1003 H373.5 Q377.5 1003 377.5 1007 V1075 Q377.5 1079 373.5 1079 H292 Q288 1079 288 1075 V1007 Q288 1003 292 1003 Z" fill="#cdcdcd"/><path d="M292 1003 H373.5 Q377.5 1003 377.5 1007 V1021.5 H288 V1007 Q288 1003 292 1003 Z" fill="#37481e"/><rect x="288" y="1021.5" width="89.5" height="1.5" fill="#7a7a7a"/><text x="293.8" y="1017.0" font-size="16" fill="#96d83a" textLength="29.0" lengthAdjust="spacingAndGlyphs" stroke="#96d83a" stroke-width="0.35">Ch 4</text><text x="293.8" y="1036.8" font-size="15" fill="#111111" textLength="73.0" lengthAdjust="spacingAndGlyphs">200 mV/div</text><text x="293.8" y="1055.7" font-size="15" fill="#111111" textLength="35.0" lengthAdjust="spacingAndGlyphs">1 MΩ</text><text x="293.8" y="1074.6" font-size="15" fill="#111111" textLength="52.0" lengthAdjust="spacingAndGlyphs">200 kHz</text><text x="359.0" y="1069.5" font-size="9" fill="#111" font-weight="bold">B</text><text x="364.0" y="1072.5" font-size="9" fill="#111" font-weight="bold">w</text>
<path d="M387 1003 H468.5 Q472.5 1003 472.5 1007 V1075 Q472.5 1079 468.5 1079 H387 Q383 1079 383 1075 V1007 Q383 1003 387 1003 Z" fill="#cdcdcd"/><path d="M387 1003 H468.5 Q472.5 1003 472.5 1007 V1021.5 H383 V1007 Q383 1003 387 1003 Z" fill="#4a3320"/><rect x="383" y="1021.5" width="89.5" height="1.5" fill="#7a7a7a"/><text x="388.8" y="1017.0" font-size="16" fill="#f5962a" textLength="45.0" lengthAdjust="spacingAndGlyphs" stroke="#f5962a" stroke-width="0.35">Math 1</text><text x="388.8" y="1036.8" font-size="15" fill="#111111" textLength="75.0" lengthAdjust="spacingAndGlyphs">73.3 mT/div</text><text x="388.8" y="1055.7" font-size="15" fill="#111111" textLength="73.0" lengthAdjust="spacingAndGlyphs">Intg(Ch2)…</text>
<path d="M482 1003 H564 Q568 1003 568 1007 V1075 Q568 1079 564 1079 H482 Q478 1079 478 1075 V1007 Q478 1003 482 1003 Z" fill="#cdcdcd"/><path d="M482 1003 H564 Q568 1003 568 1007 V1021.5 H478 V1007 Q478 1003 482 1003 Z" fill="#6a2c91"/><rect x="478" y="1021.5" width="90" height="1.5" fill="#7a7a7a"/><text x="483.8" y="1017.0" font-size="16" fill="#f4eefa" textLength="45.0" lengthAdjust="spacingAndGlyphs" stroke="#f4eefa" stroke-width="0.35">Math 2</text><text x="483.8" y="1036.8" font-size="15" fill="#111111" textLength="83.0" lengthAdjust="spacingAndGlyphs">219.51 A/div</text><text x="483.8" y="1055.7" font-size="15" fill="#111111" textLength="74.0" lengthAdjust="spacingAndGlyphs">-Intg(Ch3…</text>
<rect x="1023.5" y="999.5" width="39" height="79" rx="6" fill="url(#btn)" stroke="#6b6158" stroke-width="1"/><rect x="1027" y="1007" width="32" height="2" fill="#f5a030"/><text x="1043.0" y="1049.7" font-size="19" fill="#f0f0f0" text-anchor="middle">5</text>
<rect x="1068.5" y="999.5" width="38.5" height="79" rx="6" fill="url(#btn)" stroke="#6b6158" stroke-width="1"/><rect x="1072" y="1007" width="31.5" height="2" fill="#2830d8"/><text x="1087.8" y="1049.7" font-size="19" fill="#f0f0f0" text-anchor="middle">6</text>
<rect x="1118" y="1000" width="1" height="78" fill="#5b534c"/>
<rect x="1129.5" y="999.5" width="39" height="79" rx="6" fill="url(#btn)" stroke="#6b6158" stroke-width="1"/><rect x="1133" y="1007" width="32" height="2" fill="#b22222"/><text x="1149.0" y="1032.6" font-size="15" fill="#f0f0f0" text-anchor="middle" textLength="26.0" lengthAdjust="spacingAndGlyphs">Add</text><text x="1149.0" y="1049.0" font-size="15" fill="#f0f0f0" text-anchor="middle" textLength="29.0" lengthAdjust="spacingAndGlyphs">New</text><text x="1149.0" y="1064.7" font-size="15" fill="#f0f0f0" text-anchor="middle" textLength="33.0" lengthAdjust="spacingAndGlyphs">Math</text>
<rect x="1174.5" y="999.5" width="38.5" height="79" rx="6" fill="url(#btn)" stroke="#6b6158" stroke-width="1"/><rect x="1178" y="1007" width="31.5" height="2" fill="#c4c4d8"/><text x="1193.8" y="1032.6" font-size="15" fill="#f0f0f0" text-anchor="middle" textLength="26.0" lengthAdjust="spacingAndGlyphs">Add</text><text x="1193.8" y="1049.0" font-size="15" fill="#f0f0f0" text-anchor="middle" textLength="29.0" lengthAdjust="spacingAndGlyphs">New</text><text x="1193.8" y="1064.7" font-size="15" fill="#f0f0f0" text-anchor="middle" textLength="20.0" lengthAdjust="spacingAndGlyphs">Ref</text>
<rect x="1219.5" y="999.5" width="39" height="79" rx="6" fill="url(#btn)" stroke="#6b6158" stroke-width="1"/><rect x="1223" y="1007" width="32" height="2" fill="#c868f0"/><text x="1239.0" y="1032.6" font-size="15" fill="#f0f0f0" text-anchor="middle" textLength="26.0" lengthAdjust="spacingAndGlyphs">Add</text><text x="1239.0" y="1049.0" font-size="15" fill="#f0f0f0" text-anchor="middle" textLength="29.0" lengthAdjust="spacingAndGlyphs">New</text><text x="1239.0" y="1064.7" font-size="15" fill="#f0f0f0" text-anchor="middle" textLength="22.0" lengthAdjust="spacingAndGlyphs">Bus</text>
<rect x="1269" y="1000" width="1" height="78" fill="#5b534c"/>
<rect x="1281" y="1004" width="198.29999999999995" height="74" rx="4" fill="#cbcbcb" stroke="#222" stroke-width="0.8"/><path d="M1285 1004 H1475.3 Q1479.3 1004 1479.3 1008 V1022.5 H1281 V1008 Q1281 1004 1285 1004 Z" fill="url(#hdr)"/><rect x="1281" y="1022.5" width="198.29999999999995" height="1.2" fill="#9a9a9a"/><text x="1286.8" y="1017.8" font-size="16" fill="#f4f4f4" textLength="72.0" lengthAdjust="spacingAndGlyphs">Horizontal</text>
<text x="1285.4" y="1036.6" font-size="15" fill="#111" textLength="52.5" lengthAdjust="spacingAndGlyphs">5 ms/div</text>
<text x="1391.2" y="1036.6" font-size="15" fill="#111" textLength="38.5" lengthAdjust="spacingAndGlyphs">50 ms</text>
<text x="1285.4" y="1055.4" font-size="15" fill="#111" textLength="67.0" lengthAdjust="spacingAndGlyphs">SR: 1 MS/s</text>
<text x="1391.2" y="1055.4" font-size="15" fill="#111" textLength="43.0" lengthAdjust="spacingAndGlyphs">1 µs/pt</text>
<text x="1285.4" y="1074.2" font-size="15" fill="#111" textLength="70.0" lengthAdjust="spacingAndGlyphs">RL: 50 kpts</text>
<path d="M1391 1063.5 H1400 V1071.5 H1397 L1395.5 1074.5 L1394 1071.5 H1391 Z" fill="#111" stroke="#f5901e" stroke-width="1.3"/>
<text x="1395.5" y="1070.5" font-size="7" fill="#fff" text-anchor="middle" font-weight="bold">T</text>
<text x="1405.6" y="1074.2" font-size="15" fill="#111" textLength="21.5" lengthAdjust="spacingAndGlyphs">3%</text>
<rect x="1486" y="1004" width="158" height="74" rx="4" fill="#cbcbcb" stroke="#222" stroke-width="0.8"/><path d="M1490 1004 H1640 Q1644 1004 1644 1008 V1022.5 H1486 V1008 Q1486 1004 1490 1004 Z" fill="url(#hdr)"/><rect x="1486" y="1022.5" width="158" height="1.2" fill="#9a9a9a"/><text x="1491.8" y="1017.8" font-size="16" fill="#f4f4f4" textLength="48.5" lengthAdjust="spacingAndGlyphs">Trigger</text>
<rect x="1490" y="1025" width="30" height="15.5" rx="5" fill="#2222c4" stroke="#111" stroke-width="0.8"/>
<text x="1505.0" y="1038.3" font-size="15" fill="#fff" text-anchor="middle">6</text>
<path d="M1530 1037.2 H1534.5 L1541.5 1027.5 H1546" fill="none" stroke="#4b4ba8" stroke-width="1"/>
<text x="1556.0" y="1036.6" font-size="15" fill="#111" textLength="21.0" lengthAdjust="spacingAndGlyphs">3 V</text>
<rect x="1651" y="1004" width="148" height="74" rx="4" fill="#cbcbcb" stroke="#222" stroke-width="0.8"/><path d="M1655 1004 H1795 Q1799 1004 1799 1008 V1022.5 H1651 V1008 Q1651 1004 1655 1004 Z" fill="url(#hdr)"/><rect x="1651" y="1022.5" width="148" height="1.2" fill="#9a9a9a"/><text x="1656.8" y="1017.8" font-size="16" fill="#f4f4f4" textLength="77.5" lengthAdjust="spacingAndGlyphs">Acquisition</text>
<text x="1656.0" y="1036.7" font-size="15" fill="#111" textLength="51.5" lengthAdjust="spacingAndGlyphs">Manual,</text>
<text x="1736.3" y="1036.7" font-size="15" fill="#111" textLength="49.5" lengthAdjust="spacingAndGlyphs">Analyze</text>
<text x="1656.0" y="1055.6" font-size="15" fill="#111" textLength="107.0" lengthAdjust="spacingAndGlyphs">High Res: 16 bits</text>
<text x="1656.0" y="1074.3" font-size="15" fill="#111" textLength="69.0" lengthAdjust="spacingAndGlyphs">Single: 0 /1</text>
<rect x="1811" y="1000" width="1" height="78" fill="#5b534c"/>
<rect x="1822.5" y="999.5" width="89" height="35" rx="6" fill="#ff1f25" stroke="#5a4a48" stroke-width="1"/>
<text x="1840.5" y="1020.2" font-size="14" fill="#ffffff" textLength="53.3" lengthAdjust="spacingAndGlyphs" font-weight="bold">Preview</text>
<rect x="1822.5" y="1040" width="89" height="38.5" rx="5" fill="#cbcbcb" stroke="#444" stroke-width="0.8"/>
<text x="1867.0" y="1054.4" font-size="15" fill="#111" text-anchor="middle" textLength="80.0" lengthAdjust="spacingAndGlyphs">16 Apr 2025</text>
<text x="1867.0" y="1071.4" font-size="15" fill="#111" text-anchor="middle" textLength="73.0" lengthAdjust="spacingAndGlyphs">7:13:27 PM</text>
</svg>
</body></html>
